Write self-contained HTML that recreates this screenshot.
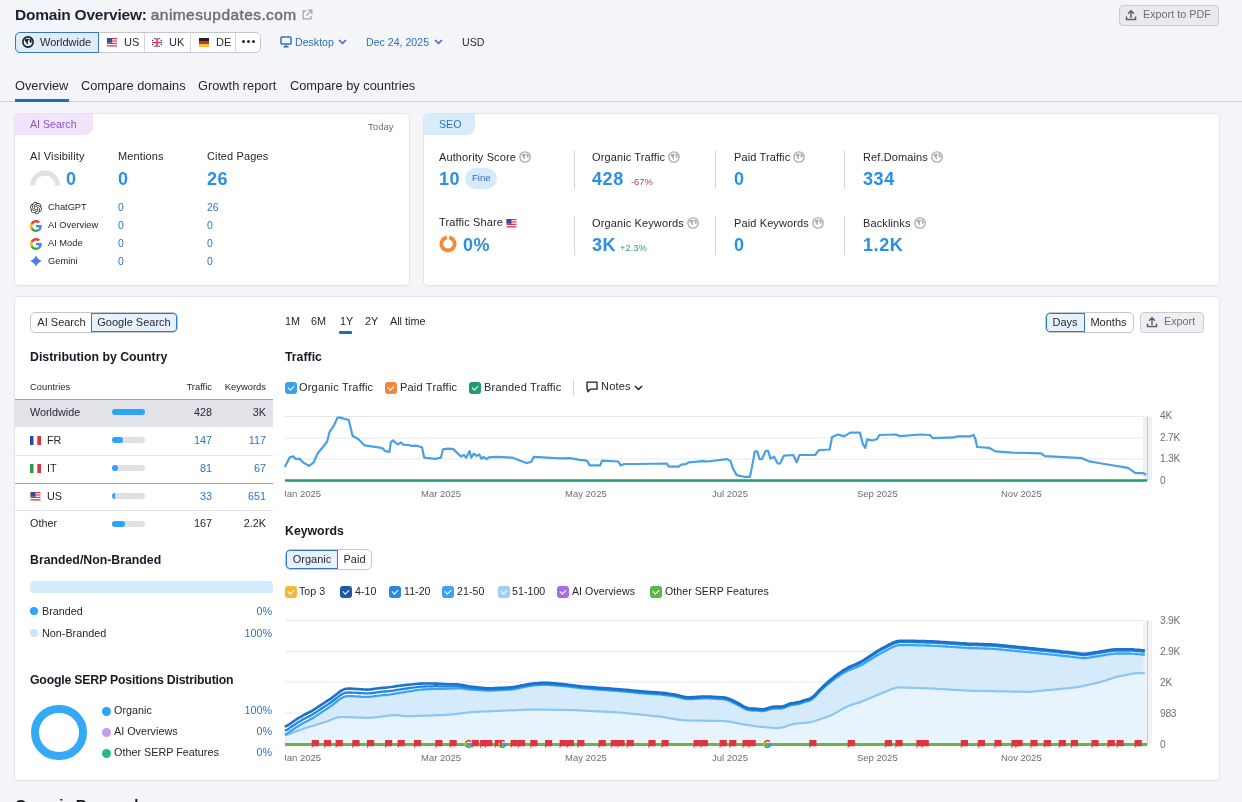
<!DOCTYPE html>
<html><head><meta charset="utf-8">
<style>
*{box-sizing:border-box;margin:0;padding:0}
html,body{width:1242px;height:802px;overflow:hidden;background:#f4f5f9;font-family:"Liberation Sans",sans-serif;color:#171a22;-webkit-font-smoothing:antialiased}
body{position:relative}
.wrap{position:absolute;left:0;top:0;width:1242px;height:802px;will-change:transform}
.a{position:absolute;white-space:nowrap;line-height:1}
.card{position:absolute;background:#fff;border-radius:4px;box-shadow:0 0 0 1px #e2e4e9,0 1px 1px 1px rgba(0,0,0,.03)}
.big{font-size:18px;font-weight:bold;color:#2b8fe3;letter-spacing:.6px}
.lbl{font-size:11px;color:#26282f;letter-spacing:.12px}
.v{color:#2f74bf}
.h{font-weight:bold;font-size:12.3px;color:#171a22}
.seg{position:absolute;border:1px solid #c4c7cf;background:#fff;border-radius:5px;overflow:hidden}
.seg div{position:absolute;top:0;bottom:0;display:flex;align-items:center;justify-content:center;font-size:11px;color:#26282f;padding-bottom:1.5px}
.sel{background:#e6f2fd;box-shadow:inset 0 0 0 1px #3377c2}
.cb{position:absolute;width:12px;height:12px;border-radius:3px}
.cb:after{content:"";position:absolute;left:4px;top:2.3px;width:2.8px;height:5.2px;border:solid #fff;border-width:0 1.4px 1.4px 0;transform:rotate(45deg)}
.leg{position:absolute;font-size:11px;color:#26282f;white-space:nowrap;line-height:1;letter-spacing:.2px}
.ax{position:absolute;font-size:9.5px;color:#6c6e79;white-space:nowrap;line-height:1}
</style></head>
<body>
<div class="wrap"><!-- HEADER -->
<div class="a" style="left:15px;top:7px;font-size:15.5px;font-weight:bold;color:#1c2033;letter-spacing:-.22px">Domain Overview: <span style="color:#6c6e79;font-weight:normal;letter-spacing:.42px;-webkit-text-stroke:.45px #6c6e79">animesupdates.com</span></div>
<svg class="a" style="left:301px;top:9px" width="12" height="12" viewBox="0 0 12 12"><path d="M5 2H2.2v7.8H10V7" fill="none" stroke="#a4a7b0" stroke-width="1.3"/><path d="M7 1.2h3.8V5M10.6 1.4 5.5 6.5" fill="none" stroke="#a4a7b0" stroke-width="1.3"/></svg>
<div class="a" style="left:1119px;top:5px;width:100px;height:21px;border:1px solid #c9ccd3;border-radius:4px;background:#e9eaef"></div>
<svg class="a" style="left:1125px;top:9px" width="12" height="12" viewBox="0 0 12 12"><path d="M6 9V2M3 4.8 6 1.8 9 4.8" fill="none" stroke="#5c5f69" stroke-width="1.5"/><path d="M1.5 7.5v3h9v-3" fill="none" stroke="#5c5f69" stroke-width="1.5"/></svg>
<div class="a" style="left:1143px;top:9.2px;font-size:10.8px;color:#6c6e79">Export to PDF</div>

<!-- country selector -->
<div class="a" style="left:15px;top:32px;width:246px;height:21px;border:1px solid #c4c7cf;border-radius:5px;background:#fff"></div>
<div class="a" style="left:15px;top:32px;width:84px;height:21px;border:1px solid #3d73b8;border-radius:5px 0 0 5px;background:#dfecf9"></div>
<div class="a" style="left:144px;top:33px;width:1px;height:19px;background:#d3d6dc"></div>
<div class="a" style="left:190px;top:33px;width:1px;height:19px;background:#d3d6dc"></div>
<div class="a" style="left:235px;top:33px;width:1px;height:19px;background:#d3d6dc"></div>
<svg class="a" style="left:22px;top:36px" width="12" height="12" viewBox="0 0 12 12"><circle cx="6" cy="6" r="5.15" fill="none" stroke="#1c1f26" stroke-width="1.6"/><path d="M2.6 3.5Q4.6 2.4 7.3 3.1L6 4.7Q5.5 5.4 6 6.4Q6.3 7.7 5.3 8.6Q4.3 7.7 4.4 6.6Q4.1 5.6 3.1 5.3Z" fill="#1c1f26"/><path d="M7.8 2.3Q10.8 3.6 9.1 7.3Q6.8 6 7.8 2.3Z" fill="#1c1f26"/></svg>
<div class="a" style="left:40px;top:37px;font-size:11px;color:#26282f">Worldwide</div>
<!-- US flag -->
<svg class="a" style="left:107px;top:38px" width="10" height="9" viewBox="0 0 10 9"><rect width="10" height="9" fill="#fff"/><g fill="#d9394b"><rect y="0" width="10" height="1.2"/><rect y="2.4" width="10" height="1.2"/><rect y="4.8" width="10" height="1.2"/><rect y="7.2" width="10" height="1.3"/></g><rect width="5" height="4.8" fill="#3b4a9e"/></svg>
<div class="a" style="left:124px;top:37px;font-size:11px;color:#26282f">US</div>
<svg class="a" style="left:152px;top:38px" width="10" height="9" viewBox="0 0 10 9"><rect width="10" height="9" fill="#3b4a9e"/><path d="M0 0 10 9M10 0 0 9" stroke="#fff" stroke-width="1.8"/><path d="M5 0v9M0 4.5h10" stroke="#fff" stroke-width="3"/><path d="M5 0v9M0 4.5h10" stroke="#d9394b" stroke-width="1.6"/></svg>
<div class="a" style="left:169px;top:37px;font-size:11px;color:#26282f">UK</div>
<svg class="a" style="left:199px;top:38px" width="10" height="9" viewBox="0 0 10 9"><rect width="10" height="3" fill="#222"/><rect y="3" width="10" height="3" fill="#dd2b2b"/><rect y="6" width="10" height="3" fill="#f6c331"/></svg>
<div class="a" style="left:216px;top:37px;font-size:11px;color:#26282f">DE</div>
<div class="a" style="left:242px;top:40px;width:13px;height:4px">
 <i style="position:absolute;left:0;top:0;width:3.4px;height:3.4px;border-radius:50%;background:#1c1f26"></i>
 <i style="position:absolute;left:4.8px;top:0;width:3.4px;height:3.4px;border-radius:50%;background:#1c1f26"></i>
 <i style="position:absolute;left:9.6px;top:0;width:3.4px;height:3.4px;border-radius:50%;background:#1c1f26"></i>
</div>
<!-- Desktop -->
<svg class="a" style="left:280px;top:36px" width="12" height="12" viewBox="0 0 12 12"><rect x="1" y="1" width="10" height="7" rx=".8" fill="none" stroke="#2f6fb8" stroke-width="1.5"/><path d="M3.5 10.8h5M6 8v2.6" stroke="#2f6fb8" stroke-width="1.4"/></svg>
<div class="a" style="left:295px;top:37px;font-size:10.6px;color:#2f6fb8">Desktop</div>
<svg class="a" style="left:338px;top:39px" width="9" height="6" viewBox="0 0 9 6"><path d="M1 1 4.5 4.5 8 1" fill="none" stroke="#2f6fb8" stroke-width="1.5"/></svg>
<div class="a" style="left:366px;top:37px;font-size:10.6px;color:#2f6fb8">Dec 24, 2025</div>
<svg class="a" style="left:434px;top:39px" width="9" height="6" viewBox="0 0 9 6"><path d="M1 1 4.5 4.5 8 1" fill="none" stroke="#2f6fb8" stroke-width="1.5"/></svg>
<div class="a" style="left:462px;top:37px;font-size:10.6px;color:#26282f">USD</div>

<!-- tabs -->
<div class="a" style="left:0;top:101px;width:1242px;height:1px;background:#cfd2d9"></div>
<div class="a" style="left:15px;top:80px;font-size:12.8px;color:#26282f">Overview</div>
<div class="a" style="left:15px;top:99px;width:54px;height:3px;background:#1f6bc4"></div>
<div class="a" style="left:81px;top:80px;font-size:12.8px;color:#26282f">Compare domains</div>
<div class="a" style="left:198px;top:80px;font-size:12.8px;color:#26282f">Growth report</div>
<div class="a" style="left:290px;top:80px;font-size:12.8px;color:#26282f">Compare by countries</div>
<!-- AI SEARCH CARD -->
<div class="card" style="left:15px;top:114px;width:394px;height:171px"></div>
<div class="a" style="left:15px;top:114px;width:78px;height:21px;background:#f1e4fb;border-radius:4px 0 8px 0"></div>
<div class="a" style="left:30px;top:119px;font-size:10.6px;color:#8a55c9">AI Search</div>
<div class="a" style="left:368px;top:122px;font-size:9.6px;color:#6c6e79">Today</div>
<div class="a lbl" style="left:30px;top:151px">AI Visibility</div>
<div class="a lbl" style="left:118px;top:151px">Mentions</div>
<div class="a lbl" style="left:207px;top:151px">Cited Pages</div>
<svg class="a" style="left:30px;top:170px" width="30" height="16" viewBox="0 0 30 16"><path d="M2.6 15.5A12.4 12.4 0 0 1 27.4 15.5" fill="none" stroke="#dfe1e6" stroke-width="5"/></svg>
<div class="a big" style="left:66px;top:170px">0</div>
<div class="a big" style="left:118px;top:170px">0</div>
<div class="a big" style="left:207px;top:170px">26</div>
<!-- rows -->
<svg class="a" style="left:30px;top:202px" width="12" height="12" viewBox="0 0 24 24"><path fill="#26282f" d="M22.2819 9.8211a5.9847 5.9847 0 0 0-.5157-4.9108 6.0462 6.0462 0 0 0-6.5098-2.9A6.0651 6.0651 0 0 0 4.9807 4.1818a5.9847 5.9847 0 0 0-3.9977 2.9 6.0462 6.0462 0 0 0 .7427 7.0966 5.98 5.98 0 0 0 .511 4.9107 6.051 6.051 0 0 0 6.5146 2.9001A5.9847 5.9847 0 0 0 13.2599 24a6.0557 6.0557 0 0 0 5.7718-4.2058 5.9894 5.9894 0 0 0 3.9977-2.9001 6.0557 6.0557 0 0 0-.7475-7.0729zm-9.022 12.6081a4.4755 4.4755 0 0 1-2.8764-1.0408l.1419-.0804 4.7783-2.7582a.7948.7948 0 0 0 .3927-.6813v-6.7369l2.02 1.1686a.071.071 0 0 1 .038.052v5.5826a4.504 4.504 0 0 1-4.4945 4.4944zm-9.6607-4.1254a4.4708 4.4708 0 0 1-.5346-3.0137l.142.0852 4.783 2.7582a.7712.7712 0 0 0 .7806 0l5.8428-3.3685v2.3324a.0804.0804 0 0 1-.0332.0615L9.74 19.9502a4.4992 4.4992 0 0 1-6.1408-1.6464zM2.3408 7.8956a4.485 4.485 0 0 1 2.3655-1.9728V11.6a.7664.7664 0 0 0 .3879.6765l5.8144 3.3543-2.0201 1.1685a.0757.0757 0 0 1-.071 0l-4.8303-2.7865A4.504 4.504 0 0 1 2.3408 7.872zm16.5963 3.8558L13.1038 8.364 15.1192 7.2a.0757.0757 0 0 1 .071 0l4.8303 2.7913a4.4944 4.4944 0 0 1-.6765 8.1042v-5.6772a.79.79 0 0 0-.407-.667zm2.0107-3.0231l-.142-.0852-4.7735-2.7818a.7759.7759 0 0 0-.7854 0L9.409 9.2297V6.8974a.0662.0662 0 0 1 .0284-.0615l4.8303-2.7866a4.4992 4.4992 0 0 1 6.6802 4.66zM8.3065 12.863l-2.02-1.1638a.0804.0804 0 0 1-.038-.0567V6.0742a4.4992 4.4992 0 0 1 7.3757-3.4537l-.142.0805L8.704 5.459a.7948.7948 0 0 0-.3927.6813zm1.0976-2.3654l2.602-1.4998 2.6069 1.4998v2.9994l-2.5974 1.4997-2.6067-1.4997Z"/></svg>
<div class="a" style="left:48px;top:203px;font-size:9.3px;color:#26282f">ChatGPT</div>
<svg class="a" style="left:30px;top:220px" width="12" height="12" viewBox="0 0 48 48"><path fill="#EA4335" d="M24 9.5c3.54 0 6.71 1.22 9.21 3.6l6.85-6.85C35.9 2.38 30.47 0 24 0 14.62 0 6.51 5.38 2.56 13.22l7.98 6.19C12.43 13.72 17.74 9.5 24 9.5z"/><path fill="#4285F4" d="M46.98 24.55c0-1.57-.15-3.09-.38-4.55H24v9.02h12.94c-.58 2.960-2.26 5.48-4.78 7.18l7.73 6c4.510-4.18 7.09-10.36 7.09-17.65z"/><path fill="#FBBC05" d="M10.53 28.59c-.48-1.45-.76-2.99-.76-4.59s.27-3.14.76-4.59l-7.98-6.19C.92 16.46 0 20.12 0 24c0 3.88.92 7.54 2.56 10.78l7.970-6.19z"/><path fill="#34A853" d="M24 48c6.48 0 11.93-2.13 15.89-5.81l-7.73-6c-2.15 1.45-4.92 2.3-8.16 2.3-6.26 0-11.57-4.22-13.47-9.910l-7.98 6.19C6.51 42.62 14.62 48 24 48z"/></svg>
<div class="a" style="left:48px;top:221px;font-size:9.3px;color:#26282f">AI Overview</div>
<svg class="a" style="left:30px;top:238px" width="12" height="12" viewBox="0 0 48 48"><path fill="#EA4335" d="M24 9.5c3.54 0 6.71 1.22 9.21 3.6l6.85-6.85C35.9 2.38 30.47 0 24 0 14.62 0 6.51 5.38 2.56 13.22l7.98 6.19C12.43 13.72 17.74 9.5 24 9.5z"/><path fill="#4285F4" d="M46.98 24.55c0-1.57-.15-3.09-.38-4.55H24v9.02h12.94c-.58 2.960-2.26 5.48-4.78 7.18l7.73 6c4.510-4.18 7.09-10.36 7.09-17.65z"/><path fill="#FBBC05" d="M10.53 28.59c-.48-1.45-.76-2.99-.76-4.59s.27-3.14.76-4.59l-7.98-6.19C.92 16.46 0 20.12 0 24c0 3.88.92 7.54 2.56 10.78l7.970-6.19z"/><path fill="#34A853" d="M24 48c6.48 0 11.93-2.13 15.89-5.81l-7.73-6c-2.15 1.45-4.92 2.3-8.16 2.3-6.26 0-11.57-4.22-13.47-9.910l-7.98 6.19C6.51 42.62 14.62 48 24 48z"/></svg>
<div class="a" style="left:48px;top:239px;font-size:9.3px;color:#26282f">AI Mode</div>
<svg class="a" style="left:30px;top:255px" width="12" height="12" viewBox="0 0 24 24"><path d="M12 .5Q15.2 8.8 23.5 12 15.2 15.2 12 23.5 8.8 15.2 .5 12 8.8 8.8 12 .5z" fill="#4f7ce8"/></svg>
<div class="a" style="left:48px;top:257px;font-size:9.3px;color:#26282f">Gemini</div>
<div class="a v" style="left:118px;top:203px;font-size:10.4px">0</div>
<div class="a v" style="left:118px;top:221px;font-size:10.4px">0</div>
<div class="a v" style="left:118px;top:239px;font-size:10.4px">0</div>
<div class="a v" style="left:118px;top:257px;font-size:10.4px">0</div>
<div class="a v" style="left:207px;top:203px;font-size:10.4px">26</div>
<div class="a v" style="left:207px;top:221px;font-size:10.4px">0</div>
<div class="a v" style="left:207px;top:239px;font-size:10.4px">0</div>
<div class="a v" style="left:207px;top:257px;font-size:10.4px">0</div>

<!-- SEO CARD -->
<div class="card" style="left:424px;top:114px;width:795px;height:171px"></div>
<div class="a" style="left:424px;top:114px;width:51px;height:21px;background:#d8edfc;border-radius:4px 0 8px 0"></div>
<div class="a" style="left:439px;top:119px;font-size:10.6px;color:#2f6fb8">SEO</div>
<!-- separators -->
<div class="a" style="left:574px;top:150px;width:1px;height:39px;background:#d3d6dc"></div>
<div class="a" style="left:715px;top:150px;width:1px;height:39px;background:#d3d6dc"></div>
<div class="a" style="left:844px;top:150px;width:1px;height:39px;background:#d3d6dc"></div>
<div class="a" style="left:574px;top:216px;width:1px;height:39px;background:#d3d6dc"></div>
<div class="a" style="left:715px;top:216px;width:1px;height:39px;background:#d3d6dc"></div>
<div class="a" style="left:844px;top:216px;width:1px;height:39px;background:#d3d6dc"></div>
<!-- row1 -->
<div class="a lbl" style="left:439px;top:151px">Authority Score<svg width="12" height="12" viewBox="0 0 12 12" style="vertical-align:-2.5px;margin-left:3px"><circle cx="6" cy="6" r="5.15" fill="none" stroke="#a9acb3" stroke-width="1.4"/><path d="M2.6 3.5Q4.6 2.4 7.3 3.1L6 4.7Q5.5 5.4 6 6.4Q6.3 7.7 5.3 8.6Q4.3 7.7 4.4 6.6Q4.1 5.6 3.1 5.3Z" fill="#a9acb3"/><path d="M7.8 2.3Q10.8 3.6 9.1 7.3Q6.8 6 7.8 2.3Z" fill="#a9acb3"/></svg></div>
<div class="a big" style="left:439px;top:170px">10</div>
<div class="a" style="left:465px;top:168px;width:32px;height:21px;border-radius:11px;background:#d5ebfc"></div>
<div class="a" style="left:472px;top:173px;font-size:9.6px;color:#2f6fb8">Fine</div>
<div class="a lbl" style="left:592px;top:151px">Organic Traffic<svg width="12" height="12" viewBox="0 0 12 12" style="vertical-align:-2.5px;margin-left:3px"><circle cx="6" cy="6" r="5.15" fill="none" stroke="#a9acb3" stroke-width="1.4"/><path d="M2.6 3.5Q4.6 2.4 7.3 3.1L6 4.7Q5.5 5.4 6 6.4Q6.3 7.7 5.3 8.6Q4.3 7.7 4.4 6.6Q4.1 5.6 3.1 5.3Z" fill="#a9acb3"/><path d="M7.8 2.3Q10.8 3.6 9.1 7.3Q6.8 6 7.8 2.3Z" fill="#a9acb3"/></svg></div>
<div class="a big" style="left:592px;top:170px">428</div>
<div class="a" style="left:631px;top:177px;font-size:9.4px;color:#c4365d">-67%</div>
<div class="a lbl" style="left:734px;top:151px">Paid Traffic<svg width="12" height="12" viewBox="0 0 12 12" style="vertical-align:-2.5px;margin-left:3px"><circle cx="6" cy="6" r="5.15" fill="none" stroke="#a9acb3" stroke-width="1.4"/><path d="M2.6 3.5Q4.6 2.4 7.3 3.1L6 4.7Q5.5 5.4 6 6.4Q6.3 7.7 5.3 8.6Q4.3 7.7 4.4 6.6Q4.1 5.6 3.1 5.3Z" fill="#a9acb3"/><path d="M7.8 2.3Q10.8 3.6 9.1 7.3Q6.8 6 7.8 2.3Z" fill="#a9acb3"/></svg></div>
<div class="a big" style="left:734px;top:170px">0</div>
<div class="a lbl" style="left:863px;top:151px">Ref.Domains<svg width="12" height="12" viewBox="0 0 12 12" style="vertical-align:-2.5px;margin-left:3px"><circle cx="6" cy="6" r="5.15" fill="none" stroke="#a9acb3" stroke-width="1.4"/><path d="M2.6 3.5Q4.6 2.4 7.3 3.1L6 4.7Q5.5 5.4 6 6.4Q6.3 7.7 5.3 8.6Q4.3 7.7 4.4 6.6Q4.1 5.6 3.1 5.3Z" fill="#a9acb3"/><path d="M7.8 2.3Q10.8 3.6 9.1 7.3Q6.8 6 7.8 2.3Z" fill="#a9acb3"/></svg></div>
<div class="a big" style="left:863px;top:170px">334</div>
<!-- row2 -->
<div class="a lbl" style="left:439px;top:217px">Traffic Share</div>
<svg class="a" style="left:506px;top:219px" width="11" height="9" viewBox="0 0 10 9"><rect width="10" height="9" fill="#fff"/><g fill="#d9394b"><rect y="0" width="10" height="1.2"/><rect y="2.4" width="10" height="1.2"/><rect y="4.8" width="10" height="1.2"/><rect y="7.2" width="10" height="1.3"/></g><rect width="5" height="4.8" fill="#3b4a9e"/></svg>
<svg class="a" style="left:439px;top:235px" width="18" height="18" viewBox="0 0 18 18"><path d="M10.2 2.4A6.6 6.6 0 1 1 7.8 2.4" fill="none" stroke="#f28c3c" stroke-width="3.8"/></svg>
<div class="a big" style="left:463px;top:236px">0%</div>
<div class="a lbl" style="left:592px;top:217px">Organic Keywords<svg width="12" height="12" viewBox="0 0 12 12" style="vertical-align:-2.5px;margin-left:3px"><circle cx="6" cy="6" r="5.15" fill="none" stroke="#a9acb3" stroke-width="1.4"/><path d="M2.6 3.5Q4.6 2.4 7.3 3.1L6 4.7Q5.5 5.4 6 6.4Q6.3 7.7 5.3 8.6Q4.3 7.7 4.4 6.6Q4.1 5.6 3.1 5.3Z" fill="#a9acb3"/><path d="M7.8 2.3Q10.8 3.6 9.1 7.3Q6.8 6 7.8 2.3Z" fill="#a9acb3"/></svg></div>
<div class="a big" style="left:592px;top:236px">3K</div>
<div class="a" style="left:620px;top:243px;font-size:9.4px;color:#3a9a73">+2.3%</div>
<div class="a lbl" style="left:734px;top:217px">Paid Keywords<svg width="12" height="12" viewBox="0 0 12 12" style="vertical-align:-2.5px;margin-left:3px"><circle cx="6" cy="6" r="5.15" fill="none" stroke="#a9acb3" stroke-width="1.4"/><path d="M2.6 3.5Q4.6 2.4 7.3 3.1L6 4.7Q5.5 5.4 6 6.4Q6.3 7.7 5.3 8.6Q4.3 7.7 4.4 6.6Q4.1 5.6 3.1 5.3Z" fill="#a9acb3"/><path d="M7.8 2.3Q10.8 3.6 9.1 7.3Q6.8 6 7.8 2.3Z" fill="#a9acb3"/></svg></div>
<div class="a big" style="left:734px;top:236px">0</div>
<div class="a lbl" style="left:863px;top:217px">Backlinks<svg width="12" height="12" viewBox="0 0 12 12" style="vertical-align:-2.5px;margin-left:3px"><circle cx="6" cy="6" r="5.15" fill="none" stroke="#a9acb3" stroke-width="1.4"/><path d="M2.6 3.5Q4.6 2.4 7.3 3.1L6 4.7Q5.5 5.4 6 6.4Q6.3 7.7 5.3 8.6Q4.3 7.7 4.4 6.6Q4.1 5.6 3.1 5.3Z" fill="#a9acb3"/><path d="M7.8 2.3Q10.8 3.6 9.1 7.3Q6.8 6 7.8 2.3Z" fill="#a9acb3"/></svg></div>
<div class="a big" style="left:863px;top:236px">1.2K</div>
<!-- MAIN CARD -->
<div class="card" style="left:15px;top:297px;width:1204px;height:483px"></div>
<div class="seg" style="left:30px;top:312px;width:148px;height:21px">
 <div style="left:0;width:61px">AI Search</div>
 <div class="sel" style="left:60px;width:86px;border-radius:0 4px 4px 0">Google Search</div>
</div>
<div class="a h" style="left:30px;top:351px">Distribution by Country</div>
<div class="a" style="left:30px;top:382px;font-size:9.4px;color:#26282f">Countries</div>
<div class="a" style="left:212px;top:382px;font-size:9.4px;color:#26282f;transform:translateX(-100%)">Traffic</div>
<div class="a" style="left:266px;top:382px;font-size:9.4px;color:#26282f;transform:translateX(-100%)">Keywords</div>
<div class="a" style="left:15px;top:399px;width:258px;height:28px;background:#e1e3e9;border-top:1px solid #9da0a8"></div>
<div class="a" style="left:15px;top:455px;width:258px;height:1px;background:#e3e5ea"></div>
<div class="a" style="left:15px;top:483px;width:258px;height:1px;background:#9da0a8"></div>
<div class="a" style="left:15px;top:510px;width:258px;height:1px;background:#e3e5ea"></div>
<!-- bars -->
<div class="a" style="left:112px;top:409px;width:33px;height:6px;border-radius:3px;background:#2fa3f5"></div>
<div class="a" style="left:112px;top:437px;width:33px;height:6px;border-radius:3px;background:#dfe1e6"><i style="position:absolute;left:0;top:0;width:11px;height:6px;border-radius:3px;background:#2fa3f5"></i></div>
<div class="a" style="left:112px;top:465px;width:33px;height:6px;border-radius:3px;background:#dfe1e6"><i style="position:absolute;left:0;top:0;width:6px;height:6px;border-radius:3px;background:#2fa3f5"></i></div>
<div class="a" style="left:112px;top:493px;width:33px;height:6px;border-radius:3px;background:#dfe1e6"><i style="position:absolute;left:0;top:0;width:3px;height:6px;border-radius:3px 0 0 3px;background:#2fa3f5"></i></div>
<div class="a" style="left:112px;top:521px;width:33px;height:6px;border-radius:3px;background:#dfe1e6"><i style="position:absolute;left:0;top:0;width:13px;height:6px;border-radius:3px;background:#2fa3f5"></i></div>
<div class="a" style="left:30px;top:407px;font-size:10.8px;color:#26282f">Worldwide</div>
<svg class="a" style="left:30px;top:436px" width="11" height="9" viewBox="0 0 11 9"><rect width="3.7" height="9" fill="#2b4aa0"/><rect x="3.7" width="3.6" height="9" fill="#fff"/><rect x="7.3" width="3.7" height="9" fill="#e0343d"/></svg>
<div class="a" style="left:47px;top:435px;font-size:10.8px;color:#26282f">FR</div>
<svg class="a" style="left:30px;top:464px" width="11" height="9" viewBox="0 0 11 9"><rect width="3.7" height="9" fill="#2f9a4a"/><rect x="3.7" width="3.6" height="9" fill="#fff"/><rect x="7.3" width="3.7" height="9" fill="#e0343d"/></svg>
<div class="a" style="left:47px;top:463px;font-size:10.8px;color:#26282f">IT</div>
<svg class="a" style="left:30px;top:492px" width="11" height="9" viewBox="0 0 10 9"><rect width="10" height="9" fill="#fff"/><g fill="#d9394b"><rect y="0" width="10" height="1.2"/><rect y="2.4" width="10" height="1.2"/><rect y="4.8" width="10" height="1.2"/><rect y="7.2" width="10" height="1.3"/></g><rect width="5" height="4.8" fill="#3b4a9e"/></svg>
<div class="a" style="left:47px;top:491px;font-size:10.8px;color:#26282f">US</div>
<div class="a" style="left:30px;top:518px;font-size:10.8px;color:#26282f">Other</div>
<div class="a" style="left:212px;top:407px;font-size:10.8px;color:#26282f;transform:translateX(-100%)">428</div>
<div class="a" style="left:266px;top:407px;font-size:10.8px;color:#26282f;transform:translateX(-100%)">3K</div>
<div class="a v" style="left:212px;top:435px;font-size:10.8px;transform:translateX(-100%)">147</div>
<div class="a v" style="left:266px;top:435px;font-size:10.8px;transform:translateX(-100%)">117</div>
<div class="a v" style="left:212px;top:463px;font-size:10.8px;transform:translateX(-100%)">81</div>
<div class="a v" style="left:266px;top:463px;font-size:10.8px;transform:translateX(-100%)">67</div>
<div class="a v" style="left:212px;top:491px;font-size:10.8px;transform:translateX(-100%)">33</div>
<div class="a v" style="left:266px;top:491px;font-size:10.8px;transform:translateX(-100%)">651</div>
<div class="a" style="left:212px;top:518px;font-size:10.8px;color:#26282f;transform:translateX(-100%)">167</div>
<div class="a" style="left:266px;top:518px;font-size:10.8px;color:#26282f;transform:translateX(-100%)">2.2K</div>

<!-- branded -->
<div class="a h" style="left:30px;top:554px">Branded/Non-Branded</div>
<div class="a" style="left:30px;top:581px;width:243px;height:12px;border-radius:4px;background:#d6ecfc"></div>
<div class="a" style="left:30px;top:607px;width:8px;height:8px;border-radius:50%;background:#2fa3f5"></div>
<div class="a" style="left:42px;top:606px;font-size:10.8px;color:#26282f">Branded</div>
<div class="a v" style="left:272px;top:606px;font-size:10.8px;transform:translateX(-100%)">0%</div>
<div class="a" style="left:30px;top:629px;width:8px;height:8px;border-radius:50%;background:#c8e5fb"></div>
<div class="a" style="left:42px;top:628px;font-size:10.8px;color:#26282f">Non-Branded</div>
<div class="a v" style="left:272px;top:628px;font-size:10.8px;transform:translateX(-100%)">100%</div>

<!-- serp -->
<div class="a h" style="left:30px;top:674px;letter-spacing:-.2px">Google SERP Positions Distribution</div>
<div class="a" style="left:31px;top:704.5px;width:55.6px;height:55.6px;border-radius:50%;border:8.4px solid #34a9f5"></div>
<div class="a" style="left:102px;top:707px;width:9px;height:9px;border-radius:50%;background:#2fa3f5"></div>
<div class="a" style="left:114px;top:705px;font-size:10.8px;color:#26282f">Organic</div>
<div class="a v" style="left:272px;top:705px;font-size:10.8px;transform:translateX(-100%)">100%</div>
<div class="a" style="left:102px;top:728px;width:9px;height:9px;border-radius:50%;background:#c59bef"></div>
<div class="a" style="left:114px;top:726px;font-size:10.8px;color:#26282f">AI Overviews</div>
<div class="a v" style="left:272px;top:726px;font-size:10.8px;transform:translateX(-100%)">0%</div>
<div class="a" style="left:102px;top:749px;width:9px;height:9px;border-radius:50%;background:#2bb884"></div>
<div class="a" style="left:114px;top:747px;font-size:10.8px;color:#26282f">Other SERP Features</div>
<div class="a v" style="left:272px;top:747px;font-size:10.8px;transform:translateX(-100%)">0%</div>

<!-- next section heading (cut) -->
<div class="a" style="left:15px;top:797.3px;font-size:15px;font-weight:bold;color:#171a22">Organic Research</div>
<svg class="a" style="left:0;top:0" width="1242" height="802" viewBox="0 0 1242 802">
<line x1="285" y1="416.5" x2="1143" y2="416.5" stroke="#e6e8ec" stroke-width="1"/>
<line x1="285" y1="438" x2="1143" y2="438" stroke="#e6e8ec" stroke-width="1"/>
<line x1="285" y1="459" x2="1143" y2="459" stroke="#e6e8ec" stroke-width="1"/>
<rect x="1143" y="416.5" width="9" height="64" fill="#eef0f3"/><line x1="1147.5" y1="416.5" x2="1147.5" y2="481" stroke="#c9ccd2" stroke-width="1"/>
<path d="M284.8,467.1 L289.7,457.4 L293.3,456.2 L295.7,459.1 L299.3,458.6 L302.9,462.3 L309.0,465.9 L313.8,462.3 L317.4,453.8 L322.3,447.8 L327.1,441.7 L329.5,432.1 L334.3,424.8 L337.5,417.6 L340.4,417.6 L348.8,420.0 L352.5,435.7 L358.5,439.3 L364.5,445.4 L380.0,447.6 L382.9,448.6 L385.1,451.1 L389.4,451.9 L390.9,442.1 L393.0,440.4 L395.2,442.4 L398.1,444.3 L401.0,442.4 L403.2,444.7 L409.0,445.0 L411.2,445.9 L416.2,445.6 L422.0,447.2 L424.2,457.7 L435.1,458.8 L440.9,457.7 L443.0,449.3 L448.1,448.6 L453.2,449.1 L461.2,456.6 L464.1,455.1 L466.2,457.7 L469.6,451.1 L471.3,457.7 L473.9,453.7 L476.4,455.9 L479.3,454.4 L481.4,458.8 L483.6,456.9 L486.5,459.2 L488.7,457.3 L495.9,456.9 L512.6,457.7 L519.1,460.2 L526.4,463.1 L531.4,461.7 L533.6,456.9 L560.0,458.3 L570.0,458.2 L579.7,459.8 L586.9,460.6 L589.8,465.4 L600.2,465.4 L601.9,460.6 L618.3,461.5 L620.7,465.4 L624.3,464.0 L637.6,464.0 L666.6,463.5 L669.0,466.6 L678.7,466.6 L681.1,464.7 L685.9,464.2 L688.4,462.3 L702.9,461.1 L707.7,461.5 L727.0,459.1 L730.6,461.1 L733.0,468.8 L736.7,475.1 L743.9,476.8 L750.0,476.8 L753.1,461.1 L754.8,451.4 L757.2,451.4 L759.6,459.1 L762.0,459.1 L765.7,450.9 L768.1,450.9 L770.5,458.6 L774.1,456.7 L777.7,463.5 L780.1,463.5 L783.8,455.7 L793.4,455.0 L796.6,462.3 L799.5,455.0 L815.2,455.0 L818.8,450.2 L829.7,449.5 L832.1,436.9 L838.1,434.5 L844.2,436.4 L850.2,432.6 L859.9,432.6 L862.9,444.1 L865.3,447.8 L867.2,439.3 L872.1,440.5 L876.9,439.3 L879.3,435.0 L896.2,434.5 L899.9,436.2 L920.4,434.5 L930.0,435.0 L932.5,438.1 L954.2,437.4 L956.6,436.4 L969.9,436.4 L973.5,435.0 L975.5,439.3 L977.1,447.0 L989.2,447.8 L995.3,451.4 L1012.2,452.6 L1041.2,453.3 L1044.8,456.2 L1082.2,458.2 L1088.3,461.1 L1101.5,463.5 L1128.1,467.8 L1135.4,473.1 L1142.6,473.1 L1146.2,474.8" fill="none" stroke="#4aa0e3" stroke-width="2.2" stroke-linejoin="round"/>
<line x1="285" y1="480.5" x2="1147" y2="480.5" stroke="#1f9a72" stroke-width="2.4"/>
<line x1="285" y1="620.5" x2="1143" y2="620.5" stroke="#e6e8ec" stroke-width="1"/>
<line x1="285" y1="651.5" x2="1143" y2="651.5" stroke="#e6e8ec" stroke-width="1"/>
<line x1="285" y1="682" x2="1143" y2="682" stroke="#e6e8ec" stroke-width="1"/>
<line x1="285" y1="713" x2="1143" y2="713" stroke="#e6e8ec" stroke-width="1"/>
<path d="M284.8,735.2 L286.8,734.7 L288.8,734.1 L290.8,733.4 L292.8,732.6 L294.8,731.9 L296.8,731.1 L298.8,730.4 L300.8,729.7 L302.8,729.0 L304.8,728.3 L306.8,727.6 L308.8,727.0 L310.8,726.4 L312.8,725.8 L314.8,725.2 L316.8,724.6 L318.8,724.0 L320.8,723.4 L322.8,722.8 L324.8,722.1 L326.8,721.5 L328.8,720.7 L330.8,719.9 L332.8,719.1 L334.8,718.3 L336.8,717.7 L338.8,717.3 L340.8,717.0 L342.8,717.0 L344.8,717.1 L346.8,717.1 L348.8,717.2 L350.8,717.3 L352.8,717.4 L354.8,717.4 L356.8,717.5 L358.8,717.6 L360.8,717.7 L362.8,717.7 L364.8,717.8 L366.8,717.9 L368.8,717.8 L370.8,717.7 L372.8,717.6 L374.8,717.3 L376.8,717.1 L378.8,716.9 L380.8,716.6 L382.8,716.4 L384.8,716.1 L386.8,715.9 L388.8,715.7 L390.8,715.4 L392.8,715.2 L394.8,715.1 L396.8,715.2 L398.8,715.3 L400.8,715.6 L402.8,715.8 L404.8,716.0 L406.8,716.1 L408.8,716.2 L410.8,716.1 L412.8,716.1 L414.8,716.0 L416.8,715.9 L418.8,715.8 L420.8,715.8 L422.8,715.7 L424.8,715.6 L426.8,715.6 L428.8,715.5 L430.8,715.4 L432.8,715.4 L434.8,715.3 L436.8,715.2 L438.8,715.2 L440.8,715.1 L442.8,715.0 L444.8,714.9 L446.8,714.9 L448.8,714.7 L450.8,714.6 L452.8,714.3 L454.8,714.1 L456.8,713.9 L458.8,713.6 L460.8,713.4 L462.8,713.2 L464.8,712.9 L466.8,712.7 L468.8,712.4 L470.8,712.2 L472.8,712.0 L474.8,711.9 L476.8,711.8 L478.8,711.7 L480.8,711.6 L482.8,711.5 L484.8,711.4 L486.8,711.3 L488.8,711.3 L490.8,711.2 L492.8,711.1 L494.8,711.0 L496.8,710.9 L498.8,710.8 L500.8,710.8 L502.8,710.7 L504.8,710.6 L506.8,710.5 L508.8,710.4 L510.8,710.3 L512.8,710.3 L514.8,710.2 L516.8,710.1 L518.8,710.0 L520.8,709.9 L522.8,709.8 L524.8,709.8 L526.8,709.7 L528.8,709.6 L530.8,709.6 L532.8,709.6 L534.8,709.6 L536.8,709.6 L538.8,709.6 L540.8,709.6 L542.8,709.6 L544.8,709.7 L546.8,709.7 L548.8,709.7 L550.8,709.8 L552.8,709.8 L554.8,709.8 L556.8,709.8 L558.8,709.9 L560.8,709.9 L562.8,709.9 L564.8,709.9 L566.8,710.0 L568.8,710.0 L570.8,710.1 L572.8,710.1 L574.8,710.2 L576.8,710.3 L578.8,710.4 L580.8,710.5 L582.8,710.6 L584.8,710.7 L586.8,710.8 L588.8,710.9 L590.8,711.0 L592.8,711.1 L594.8,711.2 L596.8,711.3 L598.8,711.4 L600.8,711.5 L602.8,711.6 L604.8,711.7 L606.8,711.8 L608.8,711.9 L610.8,712.0 L612.8,712.1 L614.8,712.2 L616.8,712.4 L618.8,712.5 L620.8,712.7 L622.8,712.8 L624.8,713.0 L626.8,713.2 L628.8,713.4 L630.8,713.6 L632.8,713.8 L634.8,714.0 L636.8,714.2 L638.8,714.4 L640.8,714.6 L642.8,714.8 L644.8,715.0 L646.8,715.2 L648.8,715.5 L650.8,715.7 L652.8,715.9 L654.8,716.1 L656.8,716.3 L658.8,716.5 L660.8,716.7 L662.8,717.0 L664.8,717.3 L666.8,717.6 L668.8,718.0 L670.8,718.3 L672.8,718.6 L674.8,719.0 L676.8,719.3 L678.8,719.6 L680.8,719.9 L682.8,720.1 L684.8,720.3 L686.8,720.4 L688.8,720.5 L690.8,720.5 L692.8,720.5 L694.8,720.6 L696.8,720.6 L698.8,720.6 L700.8,720.7 L702.8,720.7 L704.8,720.7 L706.8,720.8 L708.8,720.8 L710.8,720.8 L712.8,720.9 L714.8,720.9 L716.8,720.9 L718.8,721.0 L720.8,721.0 L722.8,721.0 L724.8,721.1 L726.8,721.3 L728.8,721.6 L730.8,721.9 L732.8,722.3 L734.8,722.7 L736.8,723.1 L738.8,723.5 L740.8,723.9 L742.8,724.2 L744.8,724.6 L746.8,724.9 L748.8,725.2 L750.8,725.5 L752.8,725.8 L754.8,726.0 L756.8,726.3 L758.8,726.6 L760.8,726.8 L762.8,727.0 L764.8,727.2 L766.8,727.4 L768.8,727.5 L770.8,727.7 L772.8,727.8 L774.8,728.0 L776.8,728.1 L778.8,728.0 L780.8,727.7 L782.8,727.3 L784.8,726.7 L786.8,726.0 L788.8,725.3 L790.8,724.7 L792.8,724.2 L794.8,723.8 L796.8,723.5 L798.8,723.4 L800.8,723.2 L802.8,723.0 L804.8,722.8 L806.8,722.6 L808.8,722.3 L810.8,722.0 L812.8,721.5 L814.8,721.0 L816.8,720.3 L818.8,719.7 L820.8,719.0 L822.8,718.3 L824.8,717.6 L826.8,717.0 L828.8,716.2 L830.8,715.4 L832.8,714.4 L834.8,713.4 L836.8,712.2 L838.8,711.1 L840.8,709.9 L842.8,708.8 L844.8,707.7 L846.8,706.7 L848.8,705.8 L850.8,705.1 L852.8,704.4 L854.8,703.8 L856.8,703.2 L858.8,702.6 L860.8,701.9 L862.8,701.1 L864.8,700.3 L866.8,699.4 L868.8,698.6 L870.8,697.8 L872.8,696.9 L874.8,696.1 L876.8,695.3 L878.8,694.4 L880.8,693.6 L882.8,692.8 L884.8,692.0 L886.8,691.2 L888.8,690.3 L890.8,689.5 L892.8,688.7 L894.8,688.2 L896.8,687.7 L898.8,687.5 L900.8,687.4 L902.8,687.5 L904.8,687.6 L906.8,687.6 L908.8,687.7 L910.8,687.8 L912.8,687.8 L914.8,687.9 L916.8,688.0 L918.8,688.0 L920.8,688.1 L922.8,688.1 L924.8,688.2 L926.8,688.3 L928.8,688.4 L930.8,688.5 L932.8,688.6 L934.8,688.7 L936.8,688.8 L938.8,689.0 L940.8,689.1 L942.8,689.2 L944.8,689.3 L946.8,689.4 L948.8,689.5 L950.8,689.7 L952.8,689.8 L954.8,689.9 L956.8,690.0 L958.8,690.1 L960.8,690.2 L962.8,690.4 L964.8,690.5 L966.8,690.6 L968.8,690.7 L970.8,690.7 L972.8,690.8 L974.8,690.8 L976.8,690.9 L978.8,690.9 L980.8,690.9 L982.8,691.0 L984.8,691.0 L986.8,691.1 L988.8,691.1 L990.8,691.1 L992.8,691.2 L994.8,691.2 L996.8,691.3 L998.8,691.3 L1000.8,691.3 L1002.8,691.4 L1004.8,691.4 L1006.8,691.5 L1008.8,691.5 L1010.8,691.5 L1012.8,691.6 L1014.8,691.6 L1016.8,691.7 L1018.8,691.7 L1020.8,691.7 L1022.8,691.8 L1024.8,691.8 L1026.8,691.8 L1028.8,691.8 L1030.8,691.7 L1032.8,691.5 L1034.8,691.4 L1036.8,691.2 L1038.8,691.0 L1040.8,690.8 L1042.8,690.6 L1044.8,690.4 L1046.8,690.2 L1048.8,690.0 L1050.8,689.8 L1052.8,689.6 L1054.8,689.5 L1056.8,689.3 L1058.8,689.1 L1060.8,688.9 L1062.8,688.7 L1064.8,688.5 L1066.8,688.3 L1068.8,688.1 L1070.8,687.9 L1072.8,687.7 L1074.8,687.5 L1076.8,687.2 L1078.8,686.9 L1080.8,686.5 L1082.8,686.1 L1084.8,685.6 L1086.8,685.2 L1088.8,684.7 L1090.8,684.2 L1092.8,683.8 L1094.8,683.3 L1096.8,682.9 L1098.8,682.4 L1100.8,681.9 L1102.8,681.3 L1104.8,680.7 L1106.8,680.0 L1108.8,679.3 L1110.8,678.7 L1112.8,678.0 L1114.8,677.4 L1116.8,676.9 L1118.8,676.4 L1120.8,676.0 L1122.8,675.6 L1124.8,675.2 L1126.8,674.9 L1128.8,674.5 L1130.8,674.1 L1132.8,673.7 L1134.8,673.4 L1136.8,673.2 L1138.8,673.1 L1140.8,673.0 L1142.8,673.1 L1144.8,673.1 L1147,744.5 L285,744.5 Z" fill="#e8f4fd"/>
<path d="M284.8,734.6 L286.8,733.7 L288.8,732.5 L290.8,731.0 L292.8,729.6 L294.8,728.2 L296.8,726.9 L298.8,725.7 L300.8,724.5 L302.8,723.3 L304.8,722.2 L306.8,721.2 L308.8,720.2 L310.8,719.1 L312.8,718.1 L314.8,716.8 L316.8,715.4 L318.8,714.1 L320.8,712.7 L322.8,711.4 L324.8,710.1 L326.8,708.8 L328.8,707.5 L330.8,706.1 L332.8,704.7 L334.8,703.1 L336.8,701.5 L338.8,699.9 L340.8,698.5 L342.8,697.4 L344.8,696.6 L346.8,696.2 L348.8,696.1 L350.8,696.1 L352.8,696.2 L354.8,696.3 L356.8,696.4 L358.8,696.5 L360.8,696.7 L362.8,696.8 L364.8,696.9 L366.8,696.9 L368.8,696.9 L370.8,696.7 L372.8,696.5 L374.8,696.1 L376.8,695.8 L378.8,695.6 L380.8,695.4 L382.8,695.2 L384.8,695.0 L386.8,694.8 L388.8,694.6 L390.8,694.3 L392.8,694.0 L394.8,693.7 L396.8,693.3 L398.8,693.0 L400.8,692.7 L402.8,692.4 L404.8,692.0 L406.8,691.7 L408.8,691.4 L410.8,691.1 L412.8,690.8 L414.8,690.4 L416.8,690.1 L418.8,689.9 L420.8,689.7 L422.8,689.5 L424.8,689.3 L426.8,689.2 L428.8,689.1 L430.8,689.0 L432.8,688.9 L434.8,688.9 L436.8,688.8 L438.8,688.8 L440.8,688.8 L442.8,688.8 L444.8,688.8 L446.8,688.7 L448.8,688.7 L450.8,688.6 L452.8,688.5 L454.8,688.3 L456.8,688.3 L458.8,688.3 L460.8,688.4 L462.8,688.6 L464.8,688.9 L466.8,689.2 L468.8,689.4 L470.8,689.6 L472.8,689.7 L474.8,689.8 L476.8,689.9 L478.8,690.0 L480.8,690.1 L482.8,690.3 L484.8,690.4 L486.8,690.5 L488.8,690.6 L490.8,690.6 L492.8,690.5 L494.8,690.4 L496.8,690.3 L498.8,690.2 L500.8,690.1 L502.8,690.0 L504.8,689.9 L506.8,689.8 L508.8,689.7 L510.8,689.5 L512.8,689.3 L514.8,689.0 L516.8,688.6 L518.8,688.2 L520.8,687.7 L522.8,687.3 L524.8,686.9 L526.8,686.5 L528.8,686.1 L530.8,685.8 L532.8,685.5 L534.8,685.3 L536.8,685.2 L538.8,685.1 L540.8,684.9 L542.8,684.8 L544.8,684.8 L546.8,684.8 L548.8,684.9 L550.8,685.0 L552.8,685.2 L554.8,685.3 L556.8,685.5 L558.8,685.7 L560.8,685.8 L562.8,686.0 L564.8,686.2 L566.8,686.4 L568.8,686.7 L570.8,686.9 L572.8,687.2 L574.8,687.4 L576.8,687.7 L578.8,687.9 L580.8,688.1 L582.8,688.4 L584.8,688.6 L586.8,688.7 L588.8,688.9 L590.8,689.0 L592.8,689.2 L594.8,689.3 L596.8,689.5 L598.8,689.6 L600.8,689.8 L602.8,689.9 L604.8,690.0 L606.8,690.2 L608.8,690.3 L610.8,690.5 L612.8,690.6 L614.8,690.8 L616.8,690.9 L618.8,691.1 L620.8,691.3 L622.8,691.4 L624.8,691.6 L626.8,691.8 L628.8,692.0 L630.8,692.2 L632.8,692.4 L634.8,692.6 L636.8,692.8 L638.8,693.0 L640.8,693.2 L642.8,693.4 L644.8,693.5 L646.8,693.7 L648.8,693.8 L650.8,693.9 L652.8,694.0 L654.8,694.2 L656.8,694.3 L658.8,694.4 L660.8,694.6 L662.8,694.8 L664.8,695.0 L666.8,695.3 L668.8,695.6 L670.8,695.9 L672.8,696.2 L674.8,696.5 L676.8,696.8 L678.8,697.3 L680.8,697.8 L682.8,698.3 L684.8,698.8 L686.8,699.1 L688.8,699.2 L690.8,699.2 L692.8,699.0 L694.8,698.9 L696.8,698.8 L698.8,698.6 L700.8,698.5 L702.8,698.4 L704.8,698.4 L706.8,698.4 L708.8,698.4 L710.8,698.5 L712.8,698.6 L714.8,698.8 L716.8,698.9 L718.8,699.0 L720.8,699.1 L722.8,699.2 L724.8,699.5 L726.8,700.0 L728.8,700.6 L730.8,701.4 L732.8,702.4 L734.8,703.4 L736.8,704.4 L738.8,705.4 L740.8,706.5 L742.8,707.7 L744.8,708.8 L746.8,709.7 L748.8,710.2 L750.8,710.4 L752.8,710.5 L754.8,710.5 L756.8,710.7 L758.8,710.9 L760.8,711.1 L762.8,711.1 L764.8,710.9 L766.8,710.3 L768.8,709.7 L770.8,709.2 L772.8,708.7 L774.8,708.5 L776.8,708.4 L778.8,708.5 L780.8,708.5 L782.8,708.2 L784.8,707.6 L786.8,706.8 L788.8,705.8 L790.8,705.1 L792.8,704.9 L794.8,704.6 L796.8,704.3 L798.8,704.0 L800.8,703.4 L802.8,702.6 L804.8,702.0 L806.8,701.5 L808.8,700.9 L810.8,700.0 L812.8,698.6 L814.8,696.9 L816.8,694.7 L818.8,692.6 L820.8,690.5 L822.8,688.7 L824.8,686.9 L826.8,685.2 L828.8,683.5 L830.8,681.9 L832.8,680.3 L834.8,678.8 L836.8,677.3 L838.8,676.0 L840.8,674.7 L842.8,673.5 L844.8,672.3 L846.8,671.2 L848.8,670.3 L850.8,669.4 L852.8,668.6 L854.8,667.9 L856.8,667.1 L858.8,666.2 L860.8,665.3 L862.8,664.2 L864.8,663.0 L866.8,661.8 L868.8,660.5 L870.8,659.3 L872.8,658.0 L874.8,656.8 L876.8,655.6 L878.8,654.4 L880.8,653.3 L882.8,652.2 L884.8,651.1 L886.8,650.1 L888.8,649.0 L890.8,647.9 L892.8,647.0 L894.8,646.2 L896.8,645.6 L898.8,645.2 L900.8,645.1 L902.8,645.1 L904.8,645.1 L906.8,645.1 L908.8,645.1 L910.8,645.2 L912.8,645.2 L914.8,645.2 L916.8,645.3 L918.8,645.3 L920.8,645.4 L922.8,645.4 L924.8,645.4 L926.8,645.5 L928.8,645.5 L930.8,645.6 L932.8,645.7 L934.8,645.8 L936.8,645.9 L938.8,646.0 L940.8,646.2 L942.8,646.3 L944.8,646.4 L946.8,646.5 L948.8,646.7 L950.8,646.8 L952.8,646.9 L954.8,647.1 L956.8,647.2 L958.8,647.3 L960.8,647.5 L962.8,647.6 L964.8,647.7 L966.8,647.9 L968.8,648.0 L970.8,648.0 L972.8,648.1 L974.8,648.2 L976.8,648.2 L978.8,648.3 L980.8,648.4 L982.8,648.4 L984.8,648.5 L986.8,648.5 L988.8,648.6 L990.8,648.7 L992.8,648.8 L994.8,648.9 L996.8,649.1 L998.8,649.3 L1000.8,649.5 L1002.8,649.7 L1004.8,649.9 L1006.8,650.1 L1008.8,650.3 L1010.8,650.5 L1012.8,650.7 L1014.8,650.9 L1016.8,651.1 L1018.8,651.3 L1020.8,651.5 L1022.8,651.7 L1024.8,651.9 L1026.8,652.1 L1028.8,652.3 L1030.8,652.5 L1032.8,652.7 L1034.8,652.9 L1036.8,653.1 L1038.8,653.3 L1040.8,653.5 L1042.8,653.7 L1044.8,653.9 L1046.8,654.1 L1048.8,654.3 L1050.8,654.5 L1052.8,654.7 L1054.8,654.9 L1056.8,655.1 L1058.8,655.3 L1060.8,655.5 L1062.8,655.8 L1064.8,656.0 L1066.8,656.2 L1068.8,656.4 L1070.8,656.7 L1072.8,656.9 L1074.8,657.2 L1076.8,657.4 L1078.8,657.7 L1080.8,657.9 L1082.8,658.0 L1084.8,658.0 L1086.8,657.9 L1088.8,657.7 L1090.8,657.3 L1092.8,657.0 L1094.8,656.6 L1096.8,656.3 L1098.8,656.0 L1100.8,655.6 L1102.8,655.3 L1104.8,655.0 L1106.8,654.6 L1108.8,654.3 L1110.8,654.0 L1112.8,653.8 L1114.8,653.6 L1116.8,653.5 L1118.8,653.5 L1120.8,653.5 L1122.8,653.5 L1124.8,653.5 L1126.8,653.5 L1128.8,653.5 L1130.8,653.6 L1132.8,653.7 L1134.8,653.9 L1136.8,654.0 L1138.8,654.2 L1140.8,654.4 L1142.8,654.5 L1144.8,654.6 L1144.8,673.1 L1142.8,673.1 L1140.8,673.0 L1138.8,673.1 L1136.8,673.2 L1134.8,673.4 L1132.8,673.7 L1130.8,674.1 L1128.8,674.5 L1126.8,674.9 L1124.8,675.2 L1122.8,675.6 L1120.8,676.0 L1118.8,676.4 L1116.8,676.9 L1114.8,677.4 L1112.8,678.0 L1110.8,678.7 L1108.8,679.3 L1106.8,680.0 L1104.8,680.7 L1102.8,681.3 L1100.8,681.9 L1098.8,682.4 L1096.8,682.9 L1094.8,683.3 L1092.8,683.8 L1090.8,684.2 L1088.8,684.7 L1086.8,685.2 L1084.8,685.6 L1082.8,686.1 L1080.8,686.5 L1078.8,686.9 L1076.8,687.2 L1074.8,687.5 L1072.8,687.7 L1070.8,687.9 L1068.8,688.1 L1066.8,688.3 L1064.8,688.5 L1062.8,688.7 L1060.8,688.9 L1058.8,689.1 L1056.8,689.3 L1054.8,689.5 L1052.8,689.6 L1050.8,689.8 L1048.8,690.0 L1046.8,690.2 L1044.8,690.4 L1042.8,690.6 L1040.8,690.8 L1038.8,691.0 L1036.8,691.2 L1034.8,691.4 L1032.8,691.5 L1030.8,691.7 L1028.8,691.8 L1026.8,691.8 L1024.8,691.8 L1022.8,691.8 L1020.8,691.7 L1018.8,691.7 L1016.8,691.7 L1014.8,691.6 L1012.8,691.6 L1010.8,691.5 L1008.8,691.5 L1006.8,691.5 L1004.8,691.4 L1002.8,691.4 L1000.8,691.3 L998.8,691.3 L996.8,691.3 L994.8,691.2 L992.8,691.2 L990.8,691.1 L988.8,691.1 L986.8,691.1 L984.8,691.0 L982.8,691.0 L980.8,690.9 L978.8,690.9 L976.8,690.9 L974.8,690.8 L972.8,690.8 L970.8,690.7 L968.8,690.7 L966.8,690.6 L964.8,690.5 L962.8,690.4 L960.8,690.2 L958.8,690.1 L956.8,690.0 L954.8,689.9 L952.8,689.8 L950.8,689.7 L948.8,689.5 L946.8,689.4 L944.8,689.3 L942.8,689.2 L940.8,689.1 L938.8,689.0 L936.8,688.8 L934.8,688.7 L932.8,688.6 L930.8,688.5 L928.8,688.4 L926.8,688.3 L924.8,688.2 L922.8,688.1 L920.8,688.1 L918.8,688.0 L916.8,688.0 L914.8,687.9 L912.8,687.8 L910.8,687.8 L908.8,687.7 L906.8,687.6 L904.8,687.6 L902.8,687.5 L900.8,687.4 L898.8,687.5 L896.8,687.7 L894.8,688.2 L892.8,688.7 L890.8,689.5 L888.8,690.3 L886.8,691.2 L884.8,692.0 L882.8,692.8 L880.8,693.6 L878.8,694.4 L876.8,695.3 L874.8,696.1 L872.8,696.9 L870.8,697.8 L868.8,698.6 L866.8,699.4 L864.8,700.3 L862.8,701.1 L860.8,701.9 L858.8,702.6 L856.8,703.2 L854.8,703.8 L852.8,704.4 L850.8,705.1 L848.8,705.8 L846.8,706.7 L844.8,707.7 L842.8,708.8 L840.8,709.9 L838.8,711.1 L836.8,712.2 L834.8,713.4 L832.8,714.4 L830.8,715.4 L828.8,716.2 L826.8,717.0 L824.8,717.6 L822.8,718.3 L820.8,719.0 L818.8,719.7 L816.8,720.3 L814.8,721.0 L812.8,721.5 L810.8,722.0 L808.8,722.3 L806.8,722.6 L804.8,722.8 L802.8,723.0 L800.8,723.2 L798.8,723.4 L796.8,723.5 L794.8,723.8 L792.8,724.2 L790.8,724.7 L788.8,725.3 L786.8,726.0 L784.8,726.7 L782.8,727.3 L780.8,727.7 L778.8,728.0 L776.8,728.1 L774.8,728.0 L772.8,727.8 L770.8,727.7 L768.8,727.5 L766.8,727.4 L764.8,727.2 L762.8,727.0 L760.8,726.8 L758.8,726.6 L756.8,726.3 L754.8,726.0 L752.8,725.8 L750.8,725.5 L748.8,725.2 L746.8,724.9 L744.8,724.6 L742.8,724.2 L740.8,723.9 L738.8,723.5 L736.8,723.1 L734.8,722.7 L732.8,722.3 L730.8,721.9 L728.8,721.6 L726.8,721.3 L724.8,721.1 L722.8,721.0 L720.8,721.0 L718.8,721.0 L716.8,720.9 L714.8,720.9 L712.8,720.9 L710.8,720.8 L708.8,720.8 L706.8,720.8 L704.8,720.7 L702.8,720.7 L700.8,720.7 L698.8,720.6 L696.8,720.6 L694.8,720.6 L692.8,720.5 L690.8,720.5 L688.8,720.5 L686.8,720.4 L684.8,720.3 L682.8,720.1 L680.8,719.9 L678.8,719.6 L676.8,719.3 L674.8,719.0 L672.8,718.6 L670.8,718.3 L668.8,718.0 L666.8,717.6 L664.8,717.3 L662.8,717.0 L660.8,716.7 L658.8,716.5 L656.8,716.3 L654.8,716.1 L652.8,715.9 L650.8,715.7 L648.8,715.5 L646.8,715.2 L644.8,715.0 L642.8,714.8 L640.8,714.6 L638.8,714.4 L636.8,714.2 L634.8,714.0 L632.8,713.8 L630.8,713.6 L628.8,713.4 L626.8,713.2 L624.8,713.0 L622.8,712.8 L620.8,712.7 L618.8,712.5 L616.8,712.4 L614.8,712.2 L612.8,712.1 L610.8,712.0 L608.8,711.9 L606.8,711.8 L604.8,711.7 L602.8,711.6 L600.8,711.5 L598.8,711.4 L596.8,711.3 L594.8,711.2 L592.8,711.1 L590.8,711.0 L588.8,710.9 L586.8,710.8 L584.8,710.7 L582.8,710.6 L580.8,710.5 L578.8,710.4 L576.8,710.3 L574.8,710.2 L572.8,710.1 L570.8,710.1 L568.8,710.0 L566.8,710.0 L564.8,709.9 L562.8,709.9 L560.8,709.9 L558.8,709.9 L556.8,709.8 L554.8,709.8 L552.8,709.8 L550.8,709.8 L548.8,709.7 L546.8,709.7 L544.8,709.7 L542.8,709.6 L540.8,709.6 L538.8,709.6 L536.8,709.6 L534.8,709.6 L532.8,709.6 L530.8,709.6 L528.8,709.6 L526.8,709.7 L524.8,709.8 L522.8,709.8 L520.8,709.9 L518.8,710.0 L516.8,710.1 L514.8,710.2 L512.8,710.3 L510.8,710.3 L508.8,710.4 L506.8,710.5 L504.8,710.6 L502.8,710.7 L500.8,710.8 L498.8,710.8 L496.8,710.9 L494.8,711.0 L492.8,711.1 L490.8,711.2 L488.8,711.3 L486.8,711.3 L484.8,711.4 L482.8,711.5 L480.8,711.6 L478.8,711.7 L476.8,711.8 L474.8,711.9 L472.8,712.0 L470.8,712.2 L468.8,712.4 L466.8,712.7 L464.8,712.9 L462.8,713.2 L460.8,713.4 L458.8,713.6 L456.8,713.9 L454.8,714.1 L452.8,714.3 L450.8,714.6 L448.8,714.7 L446.8,714.9 L444.8,714.9 L442.8,715.0 L440.8,715.1 L438.8,715.2 L436.8,715.2 L434.8,715.3 L432.8,715.4 L430.8,715.4 L428.8,715.5 L426.8,715.6 L424.8,715.6 L422.8,715.7 L420.8,715.8 L418.8,715.8 L416.8,715.9 L414.8,716.0 L412.8,716.1 L410.8,716.1 L408.8,716.2 L406.8,716.1 L404.8,716.0 L402.8,715.8 L400.8,715.6 L398.8,715.3 L396.8,715.2 L394.8,715.1 L392.8,715.2 L390.8,715.4 L388.8,715.7 L386.8,715.9 L384.8,716.1 L382.8,716.4 L380.8,716.6 L378.8,716.9 L376.8,717.1 L374.8,717.3 L372.8,717.6 L370.8,717.7 L368.8,717.8 L366.8,717.9 L364.8,717.8 L362.8,717.7 L360.8,717.7 L358.8,717.6 L356.8,717.5 L354.8,717.4 L352.8,717.4 L350.8,717.3 L348.8,717.2 L346.8,717.1 L344.8,717.1 L342.8,717.0 L340.8,717.0 L338.8,717.3 L336.8,717.7 L334.8,718.3 L332.8,719.1 L330.8,719.9 L328.8,720.7 L326.8,721.5 L324.8,722.1 L322.8,722.8 L320.8,723.4 L318.8,724.0 L316.8,724.6 L314.8,725.2 L312.8,725.8 L310.8,726.4 L308.8,727.0 L306.8,727.6 L304.8,728.3 L302.8,729.0 L300.8,729.7 L298.8,730.4 L296.8,731.1 L294.8,731.9 L292.8,732.6 L290.8,733.4 L288.8,734.1 L286.8,734.7 L284.8,735.2 Z" fill="#d5ebfb"/>
<path d="M284.8,726.8 L286.8,725.9 L288.8,724.7 L290.8,723.3 L292.8,721.8 L294.8,720.5 L296.8,719.2 L298.8,717.9 L300.8,716.8 L302.8,715.6 L304.8,714.5 L306.8,713.5 L308.8,712.5 L310.8,711.5 L312.8,710.4 L314.8,709.2 L316.8,707.8 L318.8,706.4 L320.8,705.1 L322.8,703.8 L324.8,702.5 L326.8,701.2 L328.8,699.9 L330.8,698.6 L332.8,697.1 L334.8,695.6 L336.8,694.0 L338.8,692.4 L340.8,691.0 L342.8,689.9 L344.8,689.1 L346.8,688.7 L348.8,688.6 L350.8,688.6 L352.8,688.7 L354.8,688.9 L356.8,689.0 L358.8,689.1 L360.8,689.2 L362.8,689.4 L364.8,689.5 L366.8,689.6 L368.8,689.5 L370.8,689.4 L372.8,689.1 L374.8,688.8 L376.8,688.5 L378.8,688.3 L380.8,688.1 L382.8,687.9 L384.8,687.7 L386.8,687.5 L388.8,687.3 L390.8,687.0 L392.8,686.8 L394.8,686.4 L396.8,686.1 L398.8,685.8 L400.8,685.6 L402.8,685.3 L404.8,685.1 L406.8,684.9 L408.8,684.7 L410.8,684.5 L412.8,684.3 L414.8,684.0 L416.8,683.9 L418.8,683.7 L420.8,683.6 L422.8,683.5 L424.8,683.5 L426.8,683.5 L428.8,683.5 L430.8,683.5 L432.8,683.5 L434.8,683.6 L436.8,683.6 L438.8,683.7 L440.8,683.8 L442.8,684.0 L444.8,684.1 L446.8,684.2 L448.8,684.2 L450.8,684.3 L452.8,684.3 L454.8,684.3 L456.8,684.4 L458.8,684.5 L460.8,684.8 L462.8,685.1 L464.8,685.5 L466.8,685.9 L468.8,686.3 L470.8,686.6 L472.8,686.9 L474.8,687.1 L476.8,687.3 L478.8,687.5 L480.8,687.7 L482.8,687.9 L484.8,688.1 L486.8,688.2 L488.8,688.2 L490.8,688.2 L492.8,688.2 L494.8,688.1 L496.8,688.0 L498.8,687.9 L500.8,687.9 L502.8,687.8 L504.8,687.7 L506.8,687.6 L508.8,687.5 L510.8,687.3 L512.8,687.1 L514.8,686.8 L516.8,686.4 L518.8,686.0 L520.8,685.6 L522.8,685.2 L524.8,684.8 L526.8,684.4 L528.8,684.0 L530.8,683.7 L532.8,683.5 L534.8,683.3 L536.8,683.2 L538.8,683.0 L540.8,682.9 L542.8,682.8 L544.8,682.8 L546.8,682.8 L548.8,682.9 L550.8,683.0 L552.8,683.2 L554.8,683.4 L556.8,683.6 L558.8,683.8 L560.8,683.9 L562.8,684.1 L564.8,684.3 L566.8,684.5 L568.8,684.8 L570.8,685.0 L572.8,685.3 L574.8,685.5 L576.8,685.8 L578.8,686.0 L580.8,686.2 L582.8,686.5 L584.8,686.7 L586.8,686.8 L588.8,687.0 L590.8,687.1 L592.8,687.3 L594.8,687.4 L596.8,687.6 L598.8,687.7 L600.8,687.9 L602.8,688.0 L604.8,688.1 L606.8,688.3 L608.8,688.4 L610.8,688.6 L612.8,688.7 L614.8,688.9 L616.8,689.0 L618.8,689.2 L620.8,689.4 L622.8,689.5 L624.8,689.7 L626.8,689.9 L628.8,690.1 L630.8,690.3 L632.8,690.5 L634.8,690.7 L636.8,690.9 L638.8,691.1 L640.8,691.3 L642.8,691.5 L644.8,691.6 L646.8,691.8 L648.8,691.9 L650.8,692.0 L652.8,692.1 L654.8,692.3 L656.8,692.4 L658.8,692.5 L660.8,692.7 L662.8,692.9 L664.8,693.1 L666.8,693.4 L668.8,693.7 L670.8,694.0 L672.8,694.3 L674.8,694.6 L676.8,694.9 L678.8,695.4 L680.8,695.9 L682.8,696.4 L684.8,696.9 L686.8,697.2 L688.8,697.3 L690.8,697.3 L692.8,697.1 L694.8,697.0 L696.8,696.9 L698.8,696.7 L700.8,696.6 L702.8,696.5 L704.8,696.5 L706.8,696.5 L708.8,696.5 L710.8,696.6 L712.8,696.7 L714.8,696.9 L716.8,697.0 L718.8,697.1 L720.8,697.2 L722.8,697.3 L724.8,697.6 L726.8,698.1 L728.8,698.7 L730.8,699.5 L732.8,700.5 L734.8,701.5 L736.8,702.5 L738.8,703.5 L740.8,704.6 L742.8,705.8 L744.8,706.9 L746.8,707.8 L748.8,708.3 L750.8,708.5 L752.8,708.6 L754.8,708.6 L756.8,708.8 L758.8,709.0 L760.8,709.2 L762.8,709.2 L764.8,709.0 L766.8,708.4 L768.8,707.8 L770.8,707.3 L772.8,706.8 L774.8,706.6 L776.8,706.5 L778.8,706.6 L780.8,706.6 L782.8,706.3 L784.8,705.7 L786.8,704.9 L788.8,703.9 L790.8,703.2 L792.8,703.0 L794.8,702.7 L796.8,702.4 L798.8,702.1 L800.8,701.5 L802.8,700.7 L804.8,700.1 L806.8,699.6 L808.8,699.0 L810.8,698.1 L812.8,696.7 L814.8,695.0 L816.8,692.8 L818.8,690.7 L820.8,688.6 L822.8,686.7 L824.8,684.8 L826.8,683.0 L828.8,681.3 L830.8,679.6 L832.8,677.9 L834.8,676.3 L836.8,674.7 L838.8,673.3 L840.8,672.0 L842.8,670.7 L844.8,669.4 L846.8,668.3 L848.8,667.2 L850.8,666.2 L852.8,665.4 L854.8,664.6 L856.8,663.7 L858.8,662.8 L860.8,661.7 L862.8,660.6 L864.8,659.3 L866.8,658.0 L868.8,656.7 L870.8,655.3 L872.8,654.0 L874.8,652.7 L876.8,651.4 L878.8,650.2 L880.8,649.0 L882.8,647.9 L884.8,646.8 L886.8,645.8 L888.8,644.7 L890.8,643.6 L892.8,642.7 L894.8,641.9 L896.8,641.3 L898.8,640.9 L900.8,640.8 L902.8,640.8 L904.8,640.8 L906.8,640.8 L908.8,640.8 L910.8,640.9 L912.8,640.9 L914.8,640.9 L916.8,641.0 L918.8,641.0 L920.8,641.1 L922.8,641.1 L924.8,641.1 L926.8,641.2 L928.8,641.2 L930.8,641.3 L932.8,641.4 L934.8,641.5 L936.8,641.6 L938.8,641.7 L940.8,641.9 L942.8,642.0 L944.8,642.1 L946.8,642.2 L948.8,642.4 L950.8,642.5 L952.8,642.6 L954.8,642.8 L956.8,642.9 L958.8,643.0 L960.8,643.2 L962.8,643.3 L964.8,643.4 L966.8,643.6 L968.8,643.7 L970.8,643.7 L972.8,643.8 L974.8,643.9 L976.8,643.9 L978.8,644.0 L980.8,644.1 L982.8,644.1 L984.8,644.2 L986.8,644.2 L988.8,644.3 L990.8,644.4 L992.8,644.5 L994.8,644.6 L996.8,644.8 L998.8,645.0 L1000.8,645.2 L1002.8,645.4 L1004.8,645.6 L1006.8,645.8 L1008.8,646.0 L1010.8,646.2 L1012.8,646.4 L1014.8,646.6 L1016.8,646.8 L1018.8,647.0 L1020.8,647.2 L1022.8,647.4 L1024.8,647.6 L1026.8,647.8 L1028.8,648.0 L1030.8,648.2 L1032.8,648.4 L1034.8,648.6 L1036.8,648.8 L1038.8,649.0 L1040.8,649.2 L1042.8,649.4 L1044.8,649.6 L1046.8,649.8 L1048.8,650.0 L1050.8,650.2 L1052.8,650.4 L1054.8,650.6 L1056.8,650.8 L1058.8,651.0 L1060.8,651.2 L1062.8,651.5 L1064.8,651.7 L1066.8,651.9 L1068.8,652.1 L1070.8,652.4 L1072.8,652.6 L1074.8,652.9 L1076.8,653.1 L1078.8,653.4 L1080.8,653.6 L1082.8,653.7 L1084.8,653.7 L1086.8,653.6 L1088.8,653.4 L1090.8,653.0 L1092.8,652.7 L1094.8,652.3 L1096.8,652.0 L1098.8,651.7 L1100.8,651.3 L1102.8,651.0 L1104.8,650.7 L1106.8,650.3 L1108.8,650.0 L1110.8,649.7 L1112.8,649.5 L1114.8,649.3 L1116.8,649.2 L1118.8,649.2 L1120.8,649.2 L1122.8,649.2 L1124.8,649.2 L1126.8,649.2 L1128.8,649.2 L1130.8,649.3 L1132.8,649.4 L1134.8,649.6 L1136.8,649.7 L1138.8,649.9 L1140.8,650.1 L1142.8,650.2 L1144.8,650.3 L1144.8,654.6 L1142.8,654.5 L1140.8,654.4 L1138.8,654.2 L1136.8,654.0 L1134.8,653.9 L1132.8,653.7 L1130.8,653.6 L1128.8,653.5 L1126.8,653.5 L1124.8,653.5 L1122.8,653.5 L1120.8,653.5 L1118.8,653.5 L1116.8,653.5 L1114.8,653.6 L1112.8,653.8 L1110.8,654.0 L1108.8,654.3 L1106.8,654.6 L1104.8,655.0 L1102.8,655.3 L1100.8,655.6 L1098.8,656.0 L1096.8,656.3 L1094.8,656.6 L1092.8,657.0 L1090.8,657.3 L1088.8,657.7 L1086.8,657.9 L1084.8,658.0 L1082.8,658.0 L1080.8,657.9 L1078.8,657.7 L1076.8,657.4 L1074.8,657.2 L1072.8,656.9 L1070.8,656.7 L1068.8,656.4 L1066.8,656.2 L1064.8,656.0 L1062.8,655.8 L1060.8,655.5 L1058.8,655.3 L1056.8,655.1 L1054.8,654.9 L1052.8,654.7 L1050.8,654.5 L1048.8,654.3 L1046.8,654.1 L1044.8,653.9 L1042.8,653.7 L1040.8,653.5 L1038.8,653.3 L1036.8,653.1 L1034.8,652.9 L1032.8,652.7 L1030.8,652.5 L1028.8,652.3 L1026.8,652.1 L1024.8,651.9 L1022.8,651.7 L1020.8,651.5 L1018.8,651.3 L1016.8,651.1 L1014.8,650.9 L1012.8,650.7 L1010.8,650.5 L1008.8,650.3 L1006.8,650.1 L1004.8,649.9 L1002.8,649.7 L1000.8,649.5 L998.8,649.3 L996.8,649.1 L994.8,648.9 L992.8,648.8 L990.8,648.7 L988.8,648.6 L986.8,648.5 L984.8,648.5 L982.8,648.4 L980.8,648.4 L978.8,648.3 L976.8,648.2 L974.8,648.2 L972.8,648.1 L970.8,648.0 L968.8,648.0 L966.8,647.9 L964.8,647.7 L962.8,647.6 L960.8,647.5 L958.8,647.3 L956.8,647.2 L954.8,647.1 L952.8,646.9 L950.8,646.8 L948.8,646.7 L946.8,646.5 L944.8,646.4 L942.8,646.3 L940.8,646.2 L938.8,646.0 L936.8,645.9 L934.8,645.8 L932.8,645.7 L930.8,645.6 L928.8,645.5 L926.8,645.5 L924.8,645.4 L922.8,645.4 L920.8,645.4 L918.8,645.3 L916.8,645.3 L914.8,645.2 L912.8,645.2 L910.8,645.2 L908.8,645.1 L906.8,645.1 L904.8,645.1 L902.8,645.1 L900.8,645.1 L898.8,645.2 L896.8,645.6 L894.8,646.2 L892.8,647.0 L890.8,647.9 L888.8,649.0 L886.8,650.1 L884.8,651.1 L882.8,652.2 L880.8,653.3 L878.8,654.4 L876.8,655.6 L874.8,656.8 L872.8,658.0 L870.8,659.3 L868.8,660.5 L866.8,661.8 L864.8,663.0 L862.8,664.2 L860.8,665.3 L858.8,666.2 L856.8,667.1 L854.8,667.9 L852.8,668.6 L850.8,669.4 L848.8,670.3 L846.8,671.2 L844.8,672.3 L842.8,673.5 L840.8,674.7 L838.8,676.0 L836.8,677.3 L834.8,678.8 L832.8,680.3 L830.8,681.9 L828.8,683.5 L826.8,685.2 L824.8,686.9 L822.8,688.7 L820.8,690.5 L818.8,692.6 L816.8,694.7 L814.8,696.9 L812.8,698.6 L810.8,700.0 L808.8,700.9 L806.8,701.5 L804.8,702.0 L802.8,702.6 L800.8,703.4 L798.8,704.0 L796.8,704.3 L794.8,704.6 L792.8,704.9 L790.8,705.1 L788.8,705.8 L786.8,706.8 L784.8,707.6 L782.8,708.2 L780.8,708.5 L778.8,708.5 L776.8,708.4 L774.8,708.5 L772.8,708.7 L770.8,709.2 L768.8,709.7 L766.8,710.3 L764.8,710.9 L762.8,711.1 L760.8,711.1 L758.8,710.9 L756.8,710.7 L754.8,710.5 L752.8,710.5 L750.8,710.4 L748.8,710.2 L746.8,709.7 L744.8,708.8 L742.8,707.7 L740.8,706.5 L738.8,705.4 L736.8,704.4 L734.8,703.4 L732.8,702.4 L730.8,701.4 L728.8,700.6 L726.8,700.0 L724.8,699.5 L722.8,699.2 L720.8,699.1 L718.8,699.0 L716.8,698.9 L714.8,698.8 L712.8,698.6 L710.8,698.5 L708.8,698.4 L706.8,698.4 L704.8,698.4 L702.8,698.4 L700.8,698.5 L698.8,698.6 L696.8,698.8 L694.8,698.9 L692.8,699.0 L690.8,699.2 L688.8,699.2 L686.8,699.1 L684.8,698.8 L682.8,698.3 L680.8,697.8 L678.8,697.3 L676.8,696.8 L674.8,696.5 L672.8,696.2 L670.8,695.9 L668.8,695.6 L666.8,695.3 L664.8,695.0 L662.8,694.8 L660.8,694.6 L658.8,694.4 L656.8,694.3 L654.8,694.2 L652.8,694.0 L650.8,693.9 L648.8,693.8 L646.8,693.7 L644.8,693.5 L642.8,693.4 L640.8,693.2 L638.8,693.0 L636.8,692.8 L634.8,692.6 L632.8,692.4 L630.8,692.2 L628.8,692.0 L626.8,691.8 L624.8,691.6 L622.8,691.4 L620.8,691.3 L618.8,691.1 L616.8,690.9 L614.8,690.8 L612.8,690.6 L610.8,690.5 L608.8,690.3 L606.8,690.2 L604.8,690.0 L602.8,689.9 L600.8,689.8 L598.8,689.6 L596.8,689.5 L594.8,689.3 L592.8,689.2 L590.8,689.0 L588.8,688.9 L586.8,688.7 L584.8,688.6 L582.8,688.4 L580.8,688.1 L578.8,687.9 L576.8,687.7 L574.8,687.4 L572.8,687.2 L570.8,686.9 L568.8,686.7 L566.8,686.4 L564.8,686.2 L562.8,686.0 L560.8,685.8 L558.8,685.7 L556.8,685.5 L554.8,685.3 L552.8,685.2 L550.8,685.0 L548.8,684.9 L546.8,684.8 L544.8,684.8 L542.8,684.8 L540.8,684.9 L538.8,685.1 L536.8,685.2 L534.8,685.3 L532.8,685.5 L530.8,685.8 L528.8,686.1 L526.8,686.5 L524.8,686.9 L522.8,687.3 L520.8,687.7 L518.8,688.2 L516.8,688.6 L514.8,689.0 L512.8,689.3 L510.8,689.5 L508.8,689.7 L506.8,689.8 L504.8,689.9 L502.8,690.0 L500.8,690.1 L498.8,690.2 L496.8,690.3 L494.8,690.4 L492.8,690.5 L490.8,690.6 L488.8,690.6 L486.8,690.5 L484.8,690.4 L482.8,690.3 L480.8,690.1 L478.8,690.0 L476.8,689.9 L474.8,689.8 L472.8,689.7 L470.8,689.6 L468.8,689.4 L466.8,689.2 L464.8,688.9 L462.8,688.6 L460.8,688.4 L458.8,688.3 L456.8,688.3 L454.8,688.3 L452.8,688.5 L450.8,688.6 L448.8,688.7 L446.8,688.7 L444.8,688.8 L442.8,688.8 L440.8,688.8 L438.8,688.8 L436.8,688.8 L434.8,688.9 L432.8,688.9 L430.8,689.0 L428.8,689.1 L426.8,689.2 L424.8,689.3 L422.8,689.5 L420.8,689.7 L418.8,689.9 L416.8,690.1 L414.8,690.4 L412.8,690.8 L410.8,691.1 L408.8,691.4 L406.8,691.7 L404.8,692.0 L402.8,692.4 L400.8,692.7 L398.8,693.0 L396.8,693.3 L394.8,693.7 L392.8,694.0 L390.8,694.3 L388.8,694.6 L386.8,694.8 L384.8,695.0 L382.8,695.2 L380.8,695.4 L378.8,695.6 L376.8,695.8 L374.8,696.1 L372.8,696.5 L370.8,696.7 L368.8,696.9 L366.8,696.9 L364.8,696.9 L362.8,696.8 L360.8,696.7 L358.8,696.5 L356.8,696.4 L354.8,696.3 L352.8,696.2 L350.8,696.1 L348.8,696.1 L346.8,696.2 L344.8,696.6 L342.8,697.4 L340.8,698.5 L338.8,699.9 L336.8,701.5 L334.8,703.1 L332.8,704.7 L330.8,706.1 L328.8,707.5 L326.8,708.8 L324.8,710.1 L322.8,711.4 L320.8,712.7 L318.8,714.1 L316.8,715.4 L314.8,716.8 L312.8,718.1 L310.8,719.1 L308.8,720.2 L306.8,721.2 L304.8,722.2 L302.8,723.3 L300.8,724.5 L298.8,725.7 L296.8,726.9 L294.8,728.2 L292.8,729.6 L290.8,731.0 L288.8,732.5 L286.8,733.7 L284.8,734.6 Z" fill="#ffffff"/>
<rect x="1143" y="620.5" width="9" height="124" fill="#eef0f3" opacity=".85"/><line x1="1147.5" y1="620.5" x2="1147.5" y2="745" stroke="#c9ccd2" stroke-width="1"/>
<path d="M284.8,735.2 L286.8,734.7 L288.8,734.1 L290.8,733.4 L292.8,732.6 L294.8,731.9 L296.8,731.1 L298.8,730.4 L300.8,729.7 L302.8,729.0 L304.8,728.3 L306.8,727.6 L308.8,727.0 L310.8,726.4 L312.8,725.8 L314.8,725.2 L316.8,724.6 L318.8,724.0 L320.8,723.4 L322.8,722.8 L324.8,722.1 L326.8,721.5 L328.8,720.7 L330.8,719.9 L332.8,719.1 L334.8,718.3 L336.8,717.7 L338.8,717.3 L340.8,717.0 L342.8,717.0 L344.8,717.1 L346.8,717.1 L348.8,717.2 L350.8,717.3 L352.8,717.4 L354.8,717.4 L356.8,717.5 L358.8,717.6 L360.8,717.7 L362.8,717.7 L364.8,717.8 L366.8,717.9 L368.8,717.8 L370.8,717.7 L372.8,717.6 L374.8,717.3 L376.8,717.1 L378.8,716.9 L380.8,716.6 L382.8,716.4 L384.8,716.1 L386.8,715.9 L388.8,715.7 L390.8,715.4 L392.8,715.2 L394.8,715.1 L396.8,715.2 L398.8,715.3 L400.8,715.6 L402.8,715.8 L404.8,716.0 L406.8,716.1 L408.8,716.2 L410.8,716.1 L412.8,716.1 L414.8,716.0 L416.8,715.9 L418.8,715.8 L420.8,715.8 L422.8,715.7 L424.8,715.6 L426.8,715.6 L428.8,715.5 L430.8,715.4 L432.8,715.4 L434.8,715.3 L436.8,715.2 L438.8,715.2 L440.8,715.1 L442.8,715.0 L444.8,714.9 L446.8,714.9 L448.8,714.7 L450.8,714.6 L452.8,714.3 L454.8,714.1 L456.8,713.9 L458.8,713.6 L460.8,713.4 L462.8,713.2 L464.8,712.9 L466.8,712.7 L468.8,712.4 L470.8,712.2 L472.8,712.0 L474.8,711.9 L476.8,711.8 L478.8,711.7 L480.8,711.6 L482.8,711.5 L484.8,711.4 L486.8,711.3 L488.8,711.3 L490.8,711.2 L492.8,711.1 L494.8,711.0 L496.8,710.9 L498.8,710.8 L500.8,710.8 L502.8,710.7 L504.8,710.6 L506.8,710.5 L508.8,710.4 L510.8,710.3 L512.8,710.3 L514.8,710.2 L516.8,710.1 L518.8,710.0 L520.8,709.9 L522.8,709.8 L524.8,709.8 L526.8,709.7 L528.8,709.6 L530.8,709.6 L532.8,709.6 L534.8,709.6 L536.8,709.6 L538.8,709.6 L540.8,709.6 L542.8,709.6 L544.8,709.7 L546.8,709.7 L548.8,709.7 L550.8,709.8 L552.8,709.8 L554.8,709.8 L556.8,709.8 L558.8,709.9 L560.8,709.9 L562.8,709.9 L564.8,709.9 L566.8,710.0 L568.8,710.0 L570.8,710.1 L572.8,710.1 L574.8,710.2 L576.8,710.3 L578.8,710.4 L580.8,710.5 L582.8,710.6 L584.8,710.7 L586.8,710.8 L588.8,710.9 L590.8,711.0 L592.8,711.1 L594.8,711.2 L596.8,711.3 L598.8,711.4 L600.8,711.5 L602.8,711.6 L604.8,711.7 L606.8,711.8 L608.8,711.9 L610.8,712.0 L612.8,712.1 L614.8,712.2 L616.8,712.4 L618.8,712.5 L620.8,712.7 L622.8,712.8 L624.8,713.0 L626.8,713.2 L628.8,713.4 L630.8,713.6 L632.8,713.8 L634.8,714.0 L636.8,714.2 L638.8,714.4 L640.8,714.6 L642.8,714.8 L644.8,715.0 L646.8,715.2 L648.8,715.5 L650.8,715.7 L652.8,715.9 L654.8,716.1 L656.8,716.3 L658.8,716.5 L660.8,716.7 L662.8,717.0 L664.8,717.3 L666.8,717.6 L668.8,718.0 L670.8,718.3 L672.8,718.6 L674.8,719.0 L676.8,719.3 L678.8,719.6 L680.8,719.9 L682.8,720.1 L684.8,720.3 L686.8,720.4 L688.8,720.5 L690.8,720.5 L692.8,720.5 L694.8,720.6 L696.8,720.6 L698.8,720.6 L700.8,720.7 L702.8,720.7 L704.8,720.7 L706.8,720.8 L708.8,720.8 L710.8,720.8 L712.8,720.9 L714.8,720.9 L716.8,720.9 L718.8,721.0 L720.8,721.0 L722.8,721.0 L724.8,721.1 L726.8,721.3 L728.8,721.6 L730.8,721.9 L732.8,722.3 L734.8,722.7 L736.8,723.1 L738.8,723.5 L740.8,723.9 L742.8,724.2 L744.8,724.6 L746.8,724.9 L748.8,725.2 L750.8,725.5 L752.8,725.8 L754.8,726.0 L756.8,726.3 L758.8,726.6 L760.8,726.8 L762.8,727.0 L764.8,727.2 L766.8,727.4 L768.8,727.5 L770.8,727.7 L772.8,727.8 L774.8,728.0 L776.8,728.1 L778.8,728.0 L780.8,727.7 L782.8,727.3 L784.8,726.7 L786.8,726.0 L788.8,725.3 L790.8,724.7 L792.8,724.2 L794.8,723.8 L796.8,723.5 L798.8,723.4 L800.8,723.2 L802.8,723.0 L804.8,722.8 L806.8,722.6 L808.8,722.3 L810.8,722.0 L812.8,721.5 L814.8,721.0 L816.8,720.3 L818.8,719.7 L820.8,719.0 L822.8,718.3 L824.8,717.6 L826.8,717.0 L828.8,716.2 L830.8,715.4 L832.8,714.4 L834.8,713.4 L836.8,712.2 L838.8,711.1 L840.8,709.9 L842.8,708.8 L844.8,707.7 L846.8,706.7 L848.8,705.8 L850.8,705.1 L852.8,704.4 L854.8,703.8 L856.8,703.2 L858.8,702.6 L860.8,701.9 L862.8,701.1 L864.8,700.3 L866.8,699.4 L868.8,698.6 L870.8,697.8 L872.8,696.9 L874.8,696.1 L876.8,695.3 L878.8,694.4 L880.8,693.6 L882.8,692.8 L884.8,692.0 L886.8,691.2 L888.8,690.3 L890.8,689.5 L892.8,688.7 L894.8,688.2 L896.8,687.7 L898.8,687.5 L900.8,687.4 L902.8,687.5 L904.8,687.6 L906.8,687.6 L908.8,687.7 L910.8,687.8 L912.8,687.8 L914.8,687.9 L916.8,688.0 L918.8,688.0 L920.8,688.1 L922.8,688.1 L924.8,688.2 L926.8,688.3 L928.8,688.4 L930.8,688.5 L932.8,688.6 L934.8,688.7 L936.8,688.8 L938.8,689.0 L940.8,689.1 L942.8,689.2 L944.8,689.3 L946.8,689.4 L948.8,689.5 L950.8,689.7 L952.8,689.8 L954.8,689.9 L956.8,690.0 L958.8,690.1 L960.8,690.2 L962.8,690.4 L964.8,690.5 L966.8,690.6 L968.8,690.7 L970.8,690.7 L972.8,690.8 L974.8,690.8 L976.8,690.9 L978.8,690.9 L980.8,690.9 L982.8,691.0 L984.8,691.0 L986.8,691.1 L988.8,691.1 L990.8,691.1 L992.8,691.2 L994.8,691.2 L996.8,691.3 L998.8,691.3 L1000.8,691.3 L1002.8,691.4 L1004.8,691.4 L1006.8,691.5 L1008.8,691.5 L1010.8,691.5 L1012.8,691.6 L1014.8,691.6 L1016.8,691.7 L1018.8,691.7 L1020.8,691.7 L1022.8,691.8 L1024.8,691.8 L1026.8,691.8 L1028.8,691.8 L1030.8,691.7 L1032.8,691.5 L1034.8,691.4 L1036.8,691.2 L1038.8,691.0 L1040.8,690.8 L1042.8,690.6 L1044.8,690.4 L1046.8,690.2 L1048.8,690.0 L1050.8,689.8 L1052.8,689.6 L1054.8,689.5 L1056.8,689.3 L1058.8,689.1 L1060.8,688.9 L1062.8,688.7 L1064.8,688.5 L1066.8,688.3 L1068.8,688.1 L1070.8,687.9 L1072.8,687.7 L1074.8,687.5 L1076.8,687.2 L1078.8,686.9 L1080.8,686.5 L1082.8,686.1 L1084.8,685.6 L1086.8,685.2 L1088.8,684.7 L1090.8,684.2 L1092.8,683.8 L1094.8,683.3 L1096.8,682.9 L1098.8,682.4 L1100.8,681.9 L1102.8,681.3 L1104.8,680.7 L1106.8,680.0 L1108.8,679.3 L1110.8,678.7 L1112.8,678.0 L1114.8,677.4 L1116.8,676.9 L1118.8,676.4 L1120.8,676.0 L1122.8,675.6 L1124.8,675.2 L1126.8,674.9 L1128.8,674.5 L1130.8,674.1 L1132.8,673.7 L1134.8,673.4 L1136.8,673.2 L1138.8,673.1 L1140.8,673.0 L1142.8,673.1 L1144.8,673.1" fill="none" stroke="#8cc6f3" stroke-width="2.2" stroke-linejoin="round"/>
<path d="M284.8,734.6 L286.8,733.7 L288.8,732.5 L290.8,731.0 L292.8,729.6 L294.8,728.2 L296.8,726.9 L298.8,725.7 L300.8,724.5 L302.8,723.3 L304.8,722.2 L306.8,721.2 L308.8,720.2 L310.8,719.1 L312.8,718.1 L314.8,716.8 L316.8,715.4 L318.8,714.1 L320.8,712.7 L322.8,711.4 L324.8,710.1 L326.8,708.8 L328.8,707.5 L330.8,706.1 L332.8,704.7 L334.8,703.1 L336.8,701.5 L338.8,699.9 L340.8,698.5 L342.8,697.4 L344.8,696.6 L346.8,696.2 L348.8,696.1 L350.8,696.1 L352.8,696.2 L354.8,696.3 L356.8,696.4 L358.8,696.5 L360.8,696.7 L362.8,696.8 L364.8,696.9 L366.8,696.9 L368.8,696.9 L370.8,696.7 L372.8,696.5 L374.8,696.1 L376.8,695.8 L378.8,695.6 L380.8,695.4 L382.8,695.2 L384.8,695.0 L386.8,694.8 L388.8,694.6 L390.8,694.3 L392.8,694.0 L394.8,693.7 L396.8,693.3 L398.8,693.0 L400.8,692.7 L402.8,692.4 L404.8,692.0 L406.8,691.7 L408.8,691.4 L410.8,691.1 L412.8,690.8 L414.8,690.4 L416.8,690.1 L418.8,689.9 L420.8,689.7 L422.8,689.5 L424.8,689.3 L426.8,689.2 L428.8,689.1 L430.8,689.0 L432.8,688.9 L434.8,688.9 L436.8,688.8 L438.8,688.8 L440.8,688.8 L442.8,688.8 L444.8,688.8 L446.8,688.7 L448.8,688.7 L450.8,688.6 L452.8,688.5 L454.8,688.3 L456.8,688.3 L458.8,688.3 L460.8,688.4 L462.8,688.6 L464.8,688.9 L466.8,689.2 L468.8,689.4 L470.8,689.6 L472.8,689.7 L474.8,689.8 L476.8,689.9 L478.8,690.0 L480.8,690.1 L482.8,690.3 L484.8,690.4 L486.8,690.5 L488.8,690.6 L490.8,690.6 L492.8,690.5 L494.8,690.4 L496.8,690.3 L498.8,690.2 L500.8,690.1 L502.8,690.0 L504.8,689.9 L506.8,689.8 L508.8,689.7 L510.8,689.5 L512.8,689.3 L514.8,689.0 L516.8,688.6 L518.8,688.2 L520.8,687.7 L522.8,687.3 L524.8,686.9 L526.8,686.5 L528.8,686.1 L530.8,685.8 L532.8,685.5 L534.8,685.3 L536.8,685.2 L538.8,685.1 L540.8,684.9 L542.8,684.8 L544.8,684.8 L546.8,684.8 L548.8,684.9 L550.8,685.0 L552.8,685.2 L554.8,685.3 L556.8,685.5 L558.8,685.7 L560.8,685.8 L562.8,686.0 L564.8,686.2 L566.8,686.4 L568.8,686.7 L570.8,686.9 L572.8,687.2 L574.8,687.4 L576.8,687.7 L578.8,687.9 L580.8,688.1 L582.8,688.4 L584.8,688.6 L586.8,688.7 L588.8,688.9 L590.8,689.0 L592.8,689.2 L594.8,689.3 L596.8,689.5 L598.8,689.6 L600.8,689.8 L602.8,689.9 L604.8,690.0 L606.8,690.2 L608.8,690.3 L610.8,690.5 L612.8,690.6 L614.8,690.8 L616.8,690.9 L618.8,691.1 L620.8,691.3 L622.8,691.4 L624.8,691.6 L626.8,691.8 L628.8,692.0 L630.8,692.2 L632.8,692.4 L634.8,692.6 L636.8,692.8 L638.8,693.0 L640.8,693.2 L642.8,693.4 L644.8,693.5 L646.8,693.7 L648.8,693.8 L650.8,693.9 L652.8,694.0 L654.8,694.2 L656.8,694.3 L658.8,694.4 L660.8,694.6 L662.8,694.8 L664.8,695.0 L666.8,695.3 L668.8,695.6 L670.8,695.9 L672.8,696.2 L674.8,696.5 L676.8,696.8 L678.8,697.3 L680.8,697.8 L682.8,698.3 L684.8,698.8 L686.8,699.1 L688.8,699.2 L690.8,699.2 L692.8,699.0 L694.8,698.9 L696.8,698.8 L698.8,698.6 L700.8,698.5 L702.8,698.4 L704.8,698.4 L706.8,698.4 L708.8,698.4 L710.8,698.5 L712.8,698.6 L714.8,698.8 L716.8,698.9 L718.8,699.0 L720.8,699.1 L722.8,699.2 L724.8,699.5 L726.8,700.0 L728.8,700.6 L730.8,701.4 L732.8,702.4 L734.8,703.4 L736.8,704.4 L738.8,705.4 L740.8,706.5 L742.8,707.7 L744.8,708.8 L746.8,709.7 L748.8,710.2 L750.8,710.4 L752.8,710.5 L754.8,710.5 L756.8,710.7 L758.8,710.9 L760.8,711.1 L762.8,711.1 L764.8,710.9 L766.8,710.3 L768.8,709.7 L770.8,709.2 L772.8,708.7 L774.8,708.5 L776.8,708.4 L778.8,708.5 L780.8,708.5 L782.8,708.2 L784.8,707.6 L786.8,706.8 L788.8,705.8 L790.8,705.1 L792.8,704.9 L794.8,704.6 L796.8,704.3 L798.8,704.0 L800.8,703.4 L802.8,702.6 L804.8,702.0 L806.8,701.5 L808.8,700.9 L810.8,700.0 L812.8,698.6 L814.8,696.9 L816.8,694.7 L818.8,692.6 L820.8,690.5 L822.8,688.7 L824.8,686.9 L826.8,685.2 L828.8,683.5 L830.8,681.9 L832.8,680.3 L834.8,678.8 L836.8,677.3 L838.8,676.0 L840.8,674.7 L842.8,673.5 L844.8,672.3 L846.8,671.2 L848.8,670.3 L850.8,669.4 L852.8,668.6 L854.8,667.9 L856.8,667.1 L858.8,666.2 L860.8,665.3 L862.8,664.2 L864.8,663.0 L866.8,661.8 L868.8,660.5 L870.8,659.3 L872.8,658.0 L874.8,656.8 L876.8,655.6 L878.8,654.4 L880.8,653.3 L882.8,652.2 L884.8,651.1 L886.8,650.1 L888.8,649.0 L890.8,647.9 L892.8,647.0 L894.8,646.2 L896.8,645.6 L898.8,645.2 L900.8,645.1 L902.8,645.1 L904.8,645.1 L906.8,645.1 L908.8,645.1 L910.8,645.2 L912.8,645.2 L914.8,645.2 L916.8,645.3 L918.8,645.3 L920.8,645.4 L922.8,645.4 L924.8,645.4 L926.8,645.5 L928.8,645.5 L930.8,645.6 L932.8,645.7 L934.8,645.8 L936.8,645.9 L938.8,646.0 L940.8,646.2 L942.8,646.3 L944.8,646.4 L946.8,646.5 L948.8,646.7 L950.8,646.8 L952.8,646.9 L954.8,647.1 L956.8,647.2 L958.8,647.3 L960.8,647.5 L962.8,647.6 L964.8,647.7 L966.8,647.9 L968.8,648.0 L970.8,648.0 L972.8,648.1 L974.8,648.2 L976.8,648.2 L978.8,648.3 L980.8,648.4 L982.8,648.4 L984.8,648.5 L986.8,648.5 L988.8,648.6 L990.8,648.7 L992.8,648.8 L994.8,648.9 L996.8,649.1 L998.8,649.3 L1000.8,649.5 L1002.8,649.7 L1004.8,649.9 L1006.8,650.1 L1008.8,650.3 L1010.8,650.5 L1012.8,650.7 L1014.8,650.9 L1016.8,651.1 L1018.8,651.3 L1020.8,651.5 L1022.8,651.7 L1024.8,651.9 L1026.8,652.1 L1028.8,652.3 L1030.8,652.5 L1032.8,652.7 L1034.8,652.9 L1036.8,653.1 L1038.8,653.3 L1040.8,653.5 L1042.8,653.7 L1044.8,653.9 L1046.8,654.1 L1048.8,654.3 L1050.8,654.5 L1052.8,654.7 L1054.8,654.9 L1056.8,655.1 L1058.8,655.3 L1060.8,655.5 L1062.8,655.8 L1064.8,656.0 L1066.8,656.2 L1068.8,656.4 L1070.8,656.7 L1072.8,656.9 L1074.8,657.2 L1076.8,657.4 L1078.8,657.7 L1080.8,657.9 L1082.8,658.0 L1084.8,658.0 L1086.8,657.9 L1088.8,657.7 L1090.8,657.3 L1092.8,657.0 L1094.8,656.6 L1096.8,656.3 L1098.8,656.0 L1100.8,655.6 L1102.8,655.3 L1104.8,655.0 L1106.8,654.6 L1108.8,654.3 L1110.8,654.0 L1112.8,653.8 L1114.8,653.6 L1116.8,653.5 L1118.8,653.5 L1120.8,653.5 L1122.8,653.5 L1124.8,653.5 L1126.8,653.5 L1128.8,653.5 L1130.8,653.6 L1132.8,653.7 L1134.8,653.9 L1136.8,654.0 L1138.8,654.2 L1140.8,654.4 L1142.8,654.5 L1144.8,654.6" fill="none" stroke="#3aa6f2" stroke-width="2.3" stroke-linejoin="round"/>
<path d="M284.8,730.8 L286.8,729.9 L288.8,728.7 L290.8,727.2 L292.8,725.8 L294.8,724.5 L296.8,723.2 L298.8,721.9 L300.8,720.7 L302.8,719.5 L304.8,718.5 L306.8,717.5 L308.8,716.5 L310.8,715.4 L312.8,714.3 L314.8,713.1 L316.8,711.8 L318.8,710.4 L320.8,709.0 L322.8,707.7 L324.8,706.4 L326.8,705.1 L328.8,703.8 L330.8,702.5 L332.8,701.0 L334.8,699.5 L336.8,697.9 L338.8,696.3 L340.8,694.9 L342.8,693.8 L344.8,693.0 L346.8,692.6 L348.8,692.5 L350.8,692.5 L352.8,692.6 L354.8,692.7 L356.8,692.9 L358.8,693.0 L360.8,693.1 L362.8,693.2 L364.8,693.4 L366.8,693.4 L368.8,693.4 L370.8,693.2 L372.8,693.0 L374.8,692.6 L376.8,692.3 L378.8,692.1 L380.8,691.9 L382.8,691.7 L384.8,691.5 L386.8,691.3 L388.8,691.1 L390.8,690.9 L392.8,690.6 L394.8,690.3 L396.8,689.9 L398.8,689.6 L400.8,689.3 L402.8,689.0 L404.8,688.7 L406.8,688.5 L408.8,688.2 L410.8,687.9 L412.8,687.6 L414.8,687.4 L416.8,687.1 L418.8,686.9 L420.8,686.7 L422.8,686.6 L424.8,686.5 L426.8,686.4 L428.8,686.4 L430.8,686.3 L432.8,686.3 L434.8,686.2 L436.8,686.2 L438.8,686.3 L440.8,686.3 L442.8,686.4 L444.8,686.4 L446.8,686.4 L448.8,686.4 L450.8,686.4 L452.8,686.3 L454.8,686.3 L456.8,686.3 L458.8,686.4 L460.8,686.6 L462.8,686.8 L464.8,687.1 L466.8,687.5 L468.8,687.8 L470.8,688.0 L472.8,688.2 L474.8,688.4 L476.8,688.5 L478.8,688.6 L480.8,688.8 L482.8,689.0 L484.8,689.2 L486.8,689.3 L488.8,689.3 L490.8,689.3 L492.8,689.3 L494.8,689.2 L496.8,689.1 L498.8,689.0 L500.8,688.9 L502.8,688.8 L504.8,688.7 L506.8,688.6 L508.8,688.5 L510.8,688.3 L512.8,688.1 L514.8,687.8 L516.8,687.4 L518.8,687.0 L520.8,686.6 L522.8,686.2 L524.8,685.8 L526.8,685.4 L528.8,685.0 L530.8,684.7 L532.8,684.4 L534.8,684.3 L536.8,684.1 L538.8,684.0 L540.8,683.9 L542.8,683.8 L544.8,683.7 L546.8,683.7 L548.8,683.8 L550.8,684.0 L552.8,684.1 L554.8,684.3 L556.8,684.5 L558.8,684.7 L560.8,684.8 L562.8,685.0 L564.8,685.2 L566.8,685.4 L568.8,685.7 L570.8,685.9 L572.8,686.2 L574.8,686.4 L576.8,686.7 L578.8,686.9 L580.8,687.1 L582.8,687.4 L584.8,687.6 L586.8,687.7 L588.8,687.9 L590.8,688.0 L592.8,688.2 L594.8,688.3 L596.8,688.5 L598.8,688.6 L600.8,688.8 L602.8,688.9 L604.8,689.0 L606.8,689.2 L608.8,689.3 L610.8,689.5 L612.8,689.6 L614.8,689.8 L616.8,689.9 L618.8,690.1 L620.8,690.3 L622.8,690.4 L624.8,690.6 L626.8,690.8 L628.8,691.0 L630.8,691.2 L632.8,691.4 L634.8,691.6 L636.8,691.8 L638.8,692.0 L640.8,692.2 L642.8,692.4 L644.8,692.5 L646.8,692.7 L648.8,692.8 L650.8,692.9 L652.8,693.0 L654.8,693.2 L656.8,693.3 L658.8,693.4 L660.8,693.6 L662.8,693.8 L664.8,694.0 L666.8,694.3 L668.8,694.6 L670.8,694.9 L672.8,695.2 L674.8,695.5 L676.8,695.8 L678.8,696.3 L680.8,696.8 L682.8,697.3 L684.8,697.8 L686.8,698.1 L688.8,698.2 L690.8,698.2 L692.8,698.0 L694.8,697.9 L696.8,697.8 L698.8,697.6 L700.8,697.5 L702.8,697.4 L704.8,697.4 L706.8,697.4 L708.8,697.4 L710.8,697.5 L712.8,697.6 L714.8,697.8 L716.8,697.9 L718.8,698.0 L720.8,698.1 L722.8,698.2 L724.8,698.5 L726.8,699.0 L728.8,699.6 L730.8,700.4 L732.8,701.4 L734.8,702.4 L736.8,703.4 L738.8,704.4 L740.8,705.5 L742.8,706.7 L744.8,707.8 L746.8,708.7 L748.8,709.2 L750.8,709.4 L752.8,709.5 L754.8,709.5 L756.8,709.7 L758.8,709.9 L760.8,710.1 L762.8,710.1 L764.8,709.9 L766.8,709.3 L768.8,708.7 L770.8,708.2 L772.8,707.7 L774.8,707.5 L776.8,707.4 L778.8,707.5 L780.8,707.5 L782.8,707.2 L784.8,706.6 L786.8,705.8 L788.8,704.8 L790.8,704.1 L792.8,703.9 L794.8,703.6 L796.8,703.3 L798.8,703.0 L800.8,702.4 L802.8,701.6 L804.8,701.0 L806.8,700.5 L808.8,699.9 L810.8,699.0 L812.8,697.6 L814.8,695.9 L816.8,693.7 L818.8,691.6 L820.8,689.5 L822.8,687.6 L824.8,685.7 L826.8,683.9 L828.8,682.2 L830.8,680.5 L832.8,678.8 L834.8,677.2 L836.8,675.6 L838.8,674.2 L840.8,672.9 L842.8,671.6 L844.8,670.3 L846.8,669.2 L848.8,668.1 L850.8,667.2 L852.8,666.3 L854.8,665.5 L856.8,664.7 L858.8,663.8 L860.8,662.7 L862.8,661.6 L864.8,660.3 L866.8,659.0 L868.8,657.7 L870.8,656.4 L872.8,655.1 L874.8,653.8 L876.8,652.5 L878.8,651.3 L880.8,650.1 L882.8,649.0 L884.8,648.0 L886.8,646.9 L888.8,645.9 L890.8,644.9 L892.8,643.9 L894.8,643.1 L896.8,642.6 L898.8,642.2 L900.8,642.1 L902.8,642.1 L904.8,642.1 L906.8,642.1 L908.8,642.1 L910.8,642.2 L912.8,642.2 L914.8,642.2 L916.8,642.3 L918.8,642.3 L920.8,642.4 L922.8,642.4 L924.8,642.4 L926.8,642.5 L928.8,642.5 L930.8,642.6 L932.8,642.7 L934.8,642.8 L936.8,642.9 L938.8,643.0 L940.8,643.2 L942.8,643.3 L944.8,643.4 L946.8,643.5 L948.8,643.7 L950.8,643.8 L952.8,643.9 L954.8,644.1 L956.8,644.2 L958.8,644.3 L960.8,644.5 L962.8,644.6 L964.8,644.7 L966.8,644.9 L968.8,645.0 L970.8,645.0 L972.8,645.1 L974.8,645.2 L976.8,645.2 L978.8,645.3 L980.8,645.4 L982.8,645.4 L984.8,645.5 L986.8,645.5 L988.8,645.6 L990.8,645.7 L992.8,645.8 L994.8,645.9 L996.8,646.1 L998.8,646.3 L1000.8,646.5 L1002.8,646.7 L1004.8,646.9 L1006.8,647.1 L1008.8,647.3 L1010.8,647.5 L1012.8,647.7 L1014.8,647.9 L1016.8,648.1 L1018.8,648.3 L1020.8,648.5 L1022.8,648.7 L1024.8,648.9 L1026.8,649.1 L1028.8,649.3 L1030.8,649.5 L1032.8,649.7 L1034.8,649.9 L1036.8,650.1 L1038.8,650.3 L1040.8,650.5 L1042.8,650.7 L1044.8,650.9 L1046.8,651.1 L1048.8,651.3 L1050.8,651.5 L1052.8,651.7 L1054.8,651.9 L1056.8,652.1 L1058.8,652.3 L1060.8,652.5 L1062.8,652.8 L1064.8,653.0 L1066.8,653.2 L1068.8,653.4 L1070.8,653.7 L1072.8,653.9 L1074.8,654.2 L1076.8,654.4 L1078.8,654.7 L1080.8,654.9 L1082.8,655.0 L1084.8,655.0 L1086.8,654.9 L1088.8,654.7 L1090.8,654.3 L1092.8,654.0 L1094.8,653.6 L1096.8,653.3 L1098.8,653.0 L1100.8,652.6 L1102.8,652.3 L1104.8,652.0 L1106.8,651.6 L1108.8,651.3 L1110.8,651.0 L1112.8,650.8 L1114.8,650.6 L1116.8,650.5 L1118.8,650.5 L1120.8,650.5 L1122.8,650.5 L1124.8,650.5 L1126.8,650.5 L1128.8,650.5 L1130.8,650.6 L1132.8,650.7 L1134.8,650.9 L1136.8,651.0 L1138.8,651.2 L1140.8,651.4 L1142.8,651.5 L1144.8,651.6" fill="none" stroke="#2185e0" stroke-width="2.3" stroke-linejoin="round"/>
<path d="M284.8,726.8 L286.8,725.9 L288.8,724.7 L290.8,723.3 L292.8,721.8 L294.8,720.5 L296.8,719.2 L298.8,717.9 L300.8,716.8 L302.8,715.6 L304.8,714.5 L306.8,713.5 L308.8,712.5 L310.8,711.5 L312.8,710.4 L314.8,709.2 L316.8,707.8 L318.8,706.4 L320.8,705.1 L322.8,703.8 L324.8,702.5 L326.8,701.2 L328.8,699.9 L330.8,698.6 L332.8,697.1 L334.8,695.6 L336.8,694.0 L338.8,692.4 L340.8,691.0 L342.8,689.9 L344.8,689.1 L346.8,688.7 L348.8,688.6 L350.8,688.6 L352.8,688.7 L354.8,688.9 L356.8,689.0 L358.8,689.1 L360.8,689.2 L362.8,689.4 L364.8,689.5 L366.8,689.6 L368.8,689.5 L370.8,689.4 L372.8,689.1 L374.8,688.8 L376.8,688.5 L378.8,688.3 L380.8,688.1 L382.8,687.9 L384.8,687.7 L386.8,687.5 L388.8,687.3 L390.8,687.0 L392.8,686.8 L394.8,686.4 L396.8,686.1 L398.8,685.8 L400.8,685.6 L402.8,685.3 L404.8,685.1 L406.8,684.9 L408.8,684.7 L410.8,684.5 L412.8,684.3 L414.8,684.0 L416.8,683.9 L418.8,683.7 L420.8,683.6 L422.8,683.5 L424.8,683.5 L426.8,683.5 L428.8,683.5 L430.8,683.5 L432.8,683.5 L434.8,683.6 L436.8,683.6 L438.8,683.7 L440.8,683.8 L442.8,684.0 L444.8,684.1 L446.8,684.2 L448.8,684.2 L450.8,684.3 L452.8,684.3 L454.8,684.3 L456.8,684.4 L458.8,684.5 L460.8,684.8 L462.8,685.1 L464.8,685.5 L466.8,685.9 L468.8,686.3 L470.8,686.6 L472.8,686.9 L474.8,687.1 L476.8,687.3 L478.8,687.5 L480.8,687.7 L482.8,687.9 L484.8,688.1 L486.8,688.2 L488.8,688.2 L490.8,688.2 L492.8,688.2 L494.8,688.1 L496.8,688.0 L498.8,687.9 L500.8,687.9 L502.8,687.8 L504.8,687.7 L506.8,687.6 L508.8,687.5 L510.8,687.3 L512.8,687.1 L514.8,686.8 L516.8,686.4 L518.8,686.0 L520.8,685.6 L522.8,685.2 L524.8,684.8 L526.8,684.4 L528.8,684.0 L530.8,683.7 L532.8,683.5 L534.8,683.3 L536.8,683.2 L538.8,683.0 L540.8,682.9 L542.8,682.8 L544.8,682.8 L546.8,682.8 L548.8,682.9 L550.8,683.0 L552.8,683.2 L554.8,683.4 L556.8,683.6 L558.8,683.8 L560.8,683.9 L562.8,684.1 L564.8,684.3 L566.8,684.5 L568.8,684.8 L570.8,685.0 L572.8,685.3 L574.8,685.5 L576.8,685.8 L578.8,686.0 L580.8,686.2 L582.8,686.5 L584.8,686.7 L586.8,686.8 L588.8,687.0 L590.8,687.1 L592.8,687.3 L594.8,687.4 L596.8,687.6 L598.8,687.7 L600.8,687.9 L602.8,688.0 L604.8,688.1 L606.8,688.3 L608.8,688.4 L610.8,688.6 L612.8,688.7 L614.8,688.9 L616.8,689.0 L618.8,689.2 L620.8,689.4 L622.8,689.5 L624.8,689.7 L626.8,689.9 L628.8,690.1 L630.8,690.3 L632.8,690.5 L634.8,690.7 L636.8,690.9 L638.8,691.1 L640.8,691.3 L642.8,691.5 L644.8,691.6 L646.8,691.8 L648.8,691.9 L650.8,692.0 L652.8,692.1 L654.8,692.3 L656.8,692.4 L658.8,692.5 L660.8,692.7 L662.8,692.9 L664.8,693.1 L666.8,693.4 L668.8,693.7 L670.8,694.0 L672.8,694.3 L674.8,694.6 L676.8,694.9 L678.8,695.4 L680.8,695.9 L682.8,696.4 L684.8,696.9 L686.8,697.2 L688.8,697.3 L690.8,697.3 L692.8,697.1 L694.8,697.0 L696.8,696.9 L698.8,696.7 L700.8,696.6 L702.8,696.5 L704.8,696.5 L706.8,696.5 L708.8,696.5 L710.8,696.6 L712.8,696.7 L714.8,696.9 L716.8,697.0 L718.8,697.1 L720.8,697.2 L722.8,697.3 L724.8,697.6 L726.8,698.1 L728.8,698.7 L730.8,699.5 L732.8,700.5 L734.8,701.5 L736.8,702.5 L738.8,703.5 L740.8,704.6 L742.8,705.8 L744.8,706.9 L746.8,707.8 L748.8,708.3 L750.8,708.5 L752.8,708.6 L754.8,708.6 L756.8,708.8 L758.8,709.0 L760.8,709.2 L762.8,709.2 L764.8,709.0 L766.8,708.4 L768.8,707.8 L770.8,707.3 L772.8,706.8 L774.8,706.6 L776.8,706.5 L778.8,706.6 L780.8,706.6 L782.8,706.3 L784.8,705.7 L786.8,704.9 L788.8,703.9 L790.8,703.2 L792.8,703.0 L794.8,702.7 L796.8,702.4 L798.8,702.1 L800.8,701.5 L802.8,700.7 L804.8,700.1 L806.8,699.6 L808.8,699.0 L810.8,698.1 L812.8,696.7 L814.8,695.0 L816.8,692.8 L818.8,690.7 L820.8,688.6 L822.8,686.7 L824.8,684.8 L826.8,683.0 L828.8,681.3 L830.8,679.6 L832.8,677.9 L834.8,676.3 L836.8,674.7 L838.8,673.3 L840.8,672.0 L842.8,670.7 L844.8,669.4 L846.8,668.3 L848.8,667.2 L850.8,666.2 L852.8,665.4 L854.8,664.6 L856.8,663.7 L858.8,662.8 L860.8,661.7 L862.8,660.6 L864.8,659.3 L866.8,658.0 L868.8,656.7 L870.8,655.3 L872.8,654.0 L874.8,652.7 L876.8,651.4 L878.8,650.2 L880.8,649.0 L882.8,647.9 L884.8,646.8 L886.8,645.8 L888.8,644.7 L890.8,643.6 L892.8,642.7 L894.8,641.9 L896.8,641.3 L898.8,640.9 L900.8,640.8 L902.8,640.8 L904.8,640.8 L906.8,640.8 L908.8,640.8 L910.8,640.9 L912.8,640.9 L914.8,640.9 L916.8,641.0 L918.8,641.0 L920.8,641.1 L922.8,641.1 L924.8,641.1 L926.8,641.2 L928.8,641.2 L930.8,641.3 L932.8,641.4 L934.8,641.5 L936.8,641.6 L938.8,641.7 L940.8,641.9 L942.8,642.0 L944.8,642.1 L946.8,642.2 L948.8,642.4 L950.8,642.5 L952.8,642.6 L954.8,642.8 L956.8,642.9 L958.8,643.0 L960.8,643.2 L962.8,643.3 L964.8,643.4 L966.8,643.6 L968.8,643.7 L970.8,643.7 L972.8,643.8 L974.8,643.9 L976.8,643.9 L978.8,644.0 L980.8,644.1 L982.8,644.1 L984.8,644.2 L986.8,644.2 L988.8,644.3 L990.8,644.4 L992.8,644.5 L994.8,644.6 L996.8,644.8 L998.8,645.0 L1000.8,645.2 L1002.8,645.4 L1004.8,645.6 L1006.8,645.8 L1008.8,646.0 L1010.8,646.2 L1012.8,646.4 L1014.8,646.6 L1016.8,646.8 L1018.8,647.0 L1020.8,647.2 L1022.8,647.4 L1024.8,647.6 L1026.8,647.8 L1028.8,648.0 L1030.8,648.2 L1032.8,648.4 L1034.8,648.6 L1036.8,648.8 L1038.8,649.0 L1040.8,649.2 L1042.8,649.4 L1044.8,649.6 L1046.8,649.8 L1048.8,650.0 L1050.8,650.2 L1052.8,650.4 L1054.8,650.6 L1056.8,650.8 L1058.8,651.0 L1060.8,651.2 L1062.8,651.5 L1064.8,651.7 L1066.8,651.9 L1068.8,652.1 L1070.8,652.4 L1072.8,652.6 L1074.8,652.9 L1076.8,653.1 L1078.8,653.4 L1080.8,653.6 L1082.8,653.7 L1084.8,653.7 L1086.8,653.6 L1088.8,653.4 L1090.8,653.0 L1092.8,652.7 L1094.8,652.3 L1096.8,652.0 L1098.8,651.7 L1100.8,651.3 L1102.8,651.0 L1104.8,650.7 L1106.8,650.3 L1108.8,650.0 L1110.8,649.7 L1112.8,649.5 L1114.8,649.3 L1116.8,649.2 L1118.8,649.2 L1120.8,649.2 L1122.8,649.2 L1124.8,649.2 L1126.8,649.2 L1128.8,649.2 L1130.8,649.3 L1132.8,649.4 L1134.8,649.6 L1136.8,649.7 L1138.8,649.9 L1140.8,650.1 L1142.8,650.2 L1144.8,650.3" fill="none" stroke="#1d70cc" stroke-width="2.6" stroke-linejoin="round"/>
<line x1="285" y1="744.5" x2="1147" y2="744.5" stroke="#6ab545" stroke-width="3"/>
<path d="M311.7,740 h7.2 v6.2 h-5.8 l-1.4,2.4 z" fill="#e0333d"/>
<path d="M323.9,740 h7.2 v6.2 h-5.8 l-1.4,2.4 z" fill="#e0333d"/>
<path d="M335.6,740 h7.2 v6.2 h-5.8 l-1.4,2.4 z" fill="#e0333d"/>
<path d="M352.3,740 h7.2 v6.2 h-5.8 l-1.4,2.4 z" fill="#e0333d"/>
<path d="M367.0,740 h7.2 v6.2 h-5.8 l-1.4,2.4 z" fill="#e0333d"/>
<path d="M385.0,740 h7.2 v6.2 h-5.8 l-1.4,2.4 z" fill="#e0333d"/>
<path d="M397.6,740 h7.2 v6.2 h-5.8 l-1.4,2.4 z" fill="#e0333d"/>
<path d="M413.9,740 h7.2 v6.2 h-5.8 l-1.4,2.4 z" fill="#e0333d"/>
<path d="M435.3,740 h7.2 v6.2 h-5.8 l-1.4,2.4 z" fill="#e0333d"/>
<path d="M449.5,740 h7.2 v6.2 h-5.8 l-1.4,2.4 z" fill="#e0333d"/>
<path d="M471.7,740 h7.2 v6.2 h-5.8 l-1.4,2.4 z" fill="#e0333d"/>
<path d="M480.1,740 h7.2 v6.2 h-5.8 l-1.4,2.4 z" fill="#e0333d"/>
<path d="M485.1,740 h7.2 v6.2 h-5.8 l-1.4,2.4 z" fill="#e0333d"/>
<path d="M494.7,740 h7.2 v6.2 h-5.8 l-1.4,2.4 z" fill="#e0333d"/>
<path d="M510.6,740 h7.2 v6.2 h-5.8 l-1.4,2.4 z" fill="#e0333d"/>
<path d="M517.8,740 h7.2 v6.2 h-5.8 l-1.4,2.4 z" fill="#e0333d"/>
<path d="M530.3,740 h7.2 v6.2 h-5.8 l-1.4,2.4 z" fill="#e0333d"/>
<path d="M545.0,740 h7.2 v6.2 h-5.8 l-1.4,2.4 z" fill="#e0333d"/>
<path d="M559.6,740 h7.2 v6.2 h-5.8 l-1.4,2.4 z" fill="#e0333d"/>
<path d="M566.7,740 h7.2 v6.2 h-5.8 l-1.4,2.4 z" fill="#e0333d"/>
<path d="M577.2,740 h7.2 v6.2 h-5.8 l-1.4,2.4 z" fill="#e0333d"/>
<path d="M598.6,740 h7.2 v6.2 h-5.8 l-1.4,2.4 z" fill="#e0333d"/>
<path d="M610.7,740 h7.2 v6.2 h-5.8 l-1.4,2.4 z" fill="#e0333d"/>
<path d="M617.4,740 h7.2 v6.2 h-5.8 l-1.4,2.4 z" fill="#e0333d"/>
<path d="M626.6,740 h7.2 v6.2 h-5.8 l-1.4,2.4 z" fill="#e0333d"/>
<path d="M648.4,740 h7.2 v6.2 h-5.8 l-1.4,2.4 z" fill="#e0333d"/>
<path d="M661.5,740 h7.2 v6.2 h-5.8 l-1.4,2.4 z" fill="#e0333d"/>
<path d="M693.6,740 h7.2 v6.2 h-5.8 l-1.4,2.4 z" fill="#e0333d"/>
<path d="M700.7,740 h7.2 v6.2 h-5.8 l-1.4,2.4 z" fill="#e0333d"/>
<path d="M719.6,740 h7.2 v6.2 h-5.8 l-1.4,2.4 z" fill="#e0333d"/>
<path d="M729.2,740 h7.2 v6.2 h-5.8 l-1.4,2.4 z" fill="#e0333d"/>
<path d="M742.5,740 h7.2 v6.2 h-5.8 l-1.4,2.4 z" fill="#e0333d"/>
<path d="M748.6,740 h7.2 v6.2 h-5.8 l-1.4,2.4 z" fill="#e0333d"/>
<path d="M809.3,740 h7.2 v6.2 h-5.8 l-1.4,2.4 z" fill="#e0333d"/>
<path d="M847.7,740 h7.2 v6.2 h-5.8 l-1.4,2.4 z" fill="#e0333d"/>
<path d="M884.8,740 h7.2 v6.2 h-5.8 l-1.4,2.4 z" fill="#e0333d"/>
<path d="M895.4,740 h7.2 v6.2 h-5.8 l-1.4,2.4 z" fill="#e0333d"/>
<path d="M916.4,740 h7.2 v6.2 h-5.8 l-1.4,2.4 z" fill="#e0333d"/>
<path d="M921.6,740 h7.2 v6.2 h-5.8 l-1.4,2.4 z" fill="#e0333d"/>
<path d="M960.8,740 h7.2 v6.2 h-5.8 l-1.4,2.4 z" fill="#e0333d"/>
<path d="M977.8,740 h7.2 v6.2 h-5.8 l-1.4,2.4 z" fill="#e0333d"/>
<path d="M994.4,740 h7.2 v6.2 h-5.8 l-1.4,2.4 z" fill="#e0333d"/>
<path d="M1011.4,740 h7.2 v6.2 h-5.8 l-1.4,2.4 z" fill="#e0333d"/>
<path d="M1015.4,740 h7.2 v6.2 h-5.8 l-1.4,2.4 z" fill="#e0333d"/>
<path d="M1030.4,740 h7.2 v6.2 h-5.8 l-1.4,2.4 z" fill="#e0333d"/>
<path d="M1043.7,740 h7.2 v6.2 h-5.8 l-1.4,2.4 z" fill="#e0333d"/>
<path d="M1058.7,740 h7.2 v6.2 h-5.8 l-1.4,2.4 z" fill="#e0333d"/>
<path d="M1070.8,740 h7.2 v6.2 h-5.8 l-1.4,2.4 z" fill="#e0333d"/>
<path d="M1091.4,740 h7.2 v6.2 h-5.8 l-1.4,2.4 z" fill="#e0333d"/>
<path d="M1107.6,740 h7.2 v6.2 h-5.8 l-1.4,2.4 z" fill="#e0333d"/>
<path d="M1116.5,740 h7.2 v6.2 h-5.8 l-1.4,2.4 z" fill="#e0333d"/>
<path d="M1134.6,740 h7.2 v6.2 h-5.8 l-1.4,2.4 z" fill="#e0333d"/>
<g transform="translate(464.1,739.5) scale(0.375)"><path d="M22.5 12.2c0-.8-.1-1.5-.2-2.2H12v4.2h5.9a5 5 0 0 1-2.2 3.3v2.7h3.6c2.1-1.9 3.2-4.8 3.2-8z" fill="#4285f4"/><path d="M12 23c3 0 5.5-1 7.3-2.7l-3.6-2.7c-1 .7-2.2 1-3.7 1-2.9 0-5.3-1.9-6.2-4.5H2.1v2.8A11 11 0 0 0 12 23z" fill="#34a853"/><path d="M5.8 14.1a6.6 6.6 0 0 1 0-4.2V7.1H2.1a11 11 0 0 0 0 9.8z" fill="#fbbc05"/><path d="M12 5.4c1.6 0 3.1.6 4.2 1.6l3.2-3.2A11 11 0 0 0 2.1 7.1l3.7 2.8C6.7 7.3 9.1 5.4 12 5.4z" fill="#ea4335"/></g>
<g transform="translate(498.0,739.5) scale(0.375)"><path d="M22.5 12.2c0-.8-.1-1.5-.2-2.2H12v4.2h5.9a5 5 0 0 1-2.2 3.3v2.7h3.6c2.1-1.9 3.2-4.8 3.2-8z" fill="#4285f4"/><path d="M12 23c3 0 5.5-1 7.3-2.7l-3.6-2.7c-1 .7-2.2 1-3.7 1-2.9 0-5.3-1.9-6.2-4.5H2.1v2.8A11 11 0 0 0 12 23z" fill="#34a853"/><path d="M5.8 14.1a6.6 6.6 0 0 1 0-4.2V7.1H2.1a11 11 0 0 0 0 9.8z" fill="#fbbc05"/><path d="M12 5.4c1.6 0 3.1.6 4.2 1.6l3.2-3.2A11 11 0 0 0 2.1 7.1l3.7 2.8C6.7 7.3 9.1 5.4 12 5.4z" fill="#ea4335"/></g>
<g transform="translate(763.0,739.5) scale(0.375)"><path d="M22.5 12.2c0-.8-.1-1.5-.2-2.2H12v4.2h5.9a5 5 0 0 1-2.2 3.3v2.7h3.6c2.1-1.9 3.2-4.8 3.2-8z" fill="#4285f4"/><path d="M12 23c3 0 5.5-1 7.3-2.7l-3.6-2.7c-1 .7-2.2 1-3.7 1-2.9 0-5.3-1.9-6.2-4.5H2.1v2.8A11 11 0 0 0 12 23z" fill="#34a853"/><path d="M5.8 14.1a6.6 6.6 0 0 1 0-4.2V7.1H2.1a11 11 0 0 0 0 9.8z" fill="#fbbc05"/><path d="M12 5.4c1.6 0 3.1.6 4.2 1.6l3.2-3.2A11 11 0 0 0 2.1 7.1l3.7 2.8C6.7 7.3 9.1 5.4 12 5.4z" fill="#ea4335"/></g>
</svg>
<!-- RIGHT PANEL -->
<div class="a" style="left:285px;top:316px;font-size:10.8px;color:#26282f">1M</div>
<div class="a" style="left:311px;top:316px;font-size:10.8px;color:#26282f">6M</div>
<div class="a" style="left:340px;top:316px;font-size:10.8px;color:#26282f">1Y</div>
<div class="a" style="left:365px;top:316px;font-size:10.8px;color:#26282f">2Y</div>
<div class="a" style="left:390px;top:316px;font-size:10.8px;color:#26282f">All time</div>
<div class="a" style="left:339px;top:331px;width:13px;height:3px;background:#1f6bc4;border-radius:1px"></div>
<div class="a h" style="left:285px;top:351px">Traffic</div>
<div class="cb" style="left:285px;top:382px;background:#3aa0ee"></div>
<div class="leg" style="left:299px;top:382px">Organic Traffic</div>
<div class="cb" style="left:385px;top:382px;background:#f2883f"></div>
<div class="leg" style="left:400px;top:382px">Paid Traffic</div>
<div class="cb" style="left:469px;top:382px;background:#1f9a72"></div>
<div class="leg" style="left:484px;top:382px">Branded Traffic</div>
<div class="a" style="left:573px;top:379px;width:1px;height:17px;background:#d3d6dc"></div>
<svg class="a" style="left:586px;top:381px" width="12" height="12" viewBox="0 0 12 12"><path d="M1 1.2h10v7H4.5L1.8 10.8V8.2H1z" fill="none" stroke="#1c1f26" stroke-width="1.3" stroke-linejoin="round"/></svg>
<div class="leg" style="left:601px;top:381px">Notes</div>
<svg class="a" style="left:634px;top:385px" width="9" height="6" viewBox="0 0 9 6"><path d="M1 1 4.5 4.5 8 1" fill="none" stroke="#1c1f26" stroke-width="1.5"/></svg>
<div class="seg" style="left:1044.5px;top:312px;width:89px;height:21px"><div class="sel" style="left:0;width:39px;border-radius:4px 0 0 4px">Days</div><div style="left:38px;width:50px">Months</div></div>
<div class="a" style="left:1140px;top:312px;width:64px;height:21px;border:1px solid #c9ccd3;border-radius:4px;background:#eeeff3"></div>
<svg class="a" style="left:1146px;top:316px" width="12" height="12" viewBox="0 0 12 12"><path d="M6 9V2M3 4.8 6 1.8 9 4.8" fill="none" stroke="#5c5f69" stroke-width="1.5"/><path d="M1.5 7.5v3h9v-3" fill="none" stroke="#5c5f69" stroke-width="1.5"/></svg>
<div class="a" style="left:1164px;top:316px;font-size:10.8px;color:#6c6e79">Export</div>
<div class="ax" style="left:1160px;top:410.5px;font-size:10.2px;letter-spacing:-.25px">4K</div>
<div class="ax" style="left:1160px;top:432.5px;font-size:10.2px;letter-spacing:-.25px">2.7K</div>
<div class="ax" style="left:1160px;top:453.5px;font-size:10.2px;letter-spacing:-.25px">1.3K</div>
<div class="ax" style="left:1160px;top:475.5px;font-size:10.2px;letter-spacing:-.25px">0</div>
<div class="a" style="left:285px;top:485px;width:60px;height:16px;overflow:hidden"><div class="ax" style="left:-3px;top:4px">Jan 2025</div></div>
<div class="ax" style="left:421px;top:489px">Mar 2025</div>
<div class="ax" style="left:565px;top:489px">May 2025</div>
<div class="ax" style="left:712px;top:489px">Jul 2025</div>
<div class="ax" style="left:857px;top:489px">Sep 2025</div>
<div class="ax" style="left:1001px;top:489px">Nov 2025</div>
<div class="a h" style="left:285px;top:525px">Keywords</div>
<div class="seg" style="left:285px;top:549px;width:87px;height:21px"><div class="sel" style="left:0;width:52px;border-radius:4px 0 0 4px">Organic</div><div style="left:51px;width:35px">Paid</div></div>
<div class="cb" style="left:285px;top:586px;background:#f6b63a"></div>
<div class="leg" style="left:299px;top:586px;font-size:10.6px;letter-spacing:.05px">Top 3</div>
<div class="cb" style="left:340px;top:586px;background:#1a5aa6"></div>
<div class="leg" style="left:355px;top:586px;font-size:10.6px;letter-spacing:.05px">4-10</div>
<div class="cb" style="left:389px;top:586px;background:#2a86de"></div>
<div class="leg" style="left:404px;top:586px;font-size:10.6px;letter-spacing:.05px">11-20</div>
<div class="cb" style="left:442px;top:586px;background:#38a5ee"></div>
<div class="leg" style="left:457px;top:586px;font-size:10.6px;letter-spacing:.05px">21-50</div>
<div class="cb" style="left:498px;top:586px;background:#9bd0f7"></div>
<div class="leg" style="left:512px;top:586px;font-size:10.6px;letter-spacing:.05px">51-100</div>
<div class="cb" style="left:557px;top:586px;background:#a46eea"></div>
<div class="leg" style="left:572px;top:586px;font-size:10.6px;letter-spacing:.05px">AI Overviews</div>
<div class="cb" style="left:650px;top:586px;background:#5cb544"></div>
<div class="leg" style="left:665px;top:586px;font-size:10.6px;letter-spacing:.05px">Other SERP Features</div>
<div class="ax" style="left:1160px;top:615.5px;font-size:10.2px;letter-spacing:-.25px">3.9K</div>
<div class="ax" style="left:1160px;top:646.5px;font-size:10.2px;letter-spacing:-.25px">2.9K</div>
<div class="ax" style="left:1160px;top:677.5px;font-size:10.2px;letter-spacing:-.25px">2K</div>
<div class="ax" style="left:1160px;top:708.5px;font-size:10.2px;letter-spacing:-.25px">983</div>
<div class="ax" style="left:1160px;top:739.5px;font-size:10.2px;letter-spacing:-.25px">0</div>
<div class="a" style="left:285px;top:749px;width:60px;height:16px;overflow:hidden"><div class="ax" style="left:-3px;top:4px">Jan 2025</div></div>
<div class="ax" style="left:421px;top:753px">Mar 2025</div>
<div class="ax" style="left:565px;top:753px">May 2025</div>
<div class="ax" style="left:712px;top:753px">Jul 2025</div>
<div class="ax" style="left:857px;top:753px">Sep 2025</div>
<div class="ax" style="left:1001px;top:753px">Nov 2025</div>
</div></body></html>
